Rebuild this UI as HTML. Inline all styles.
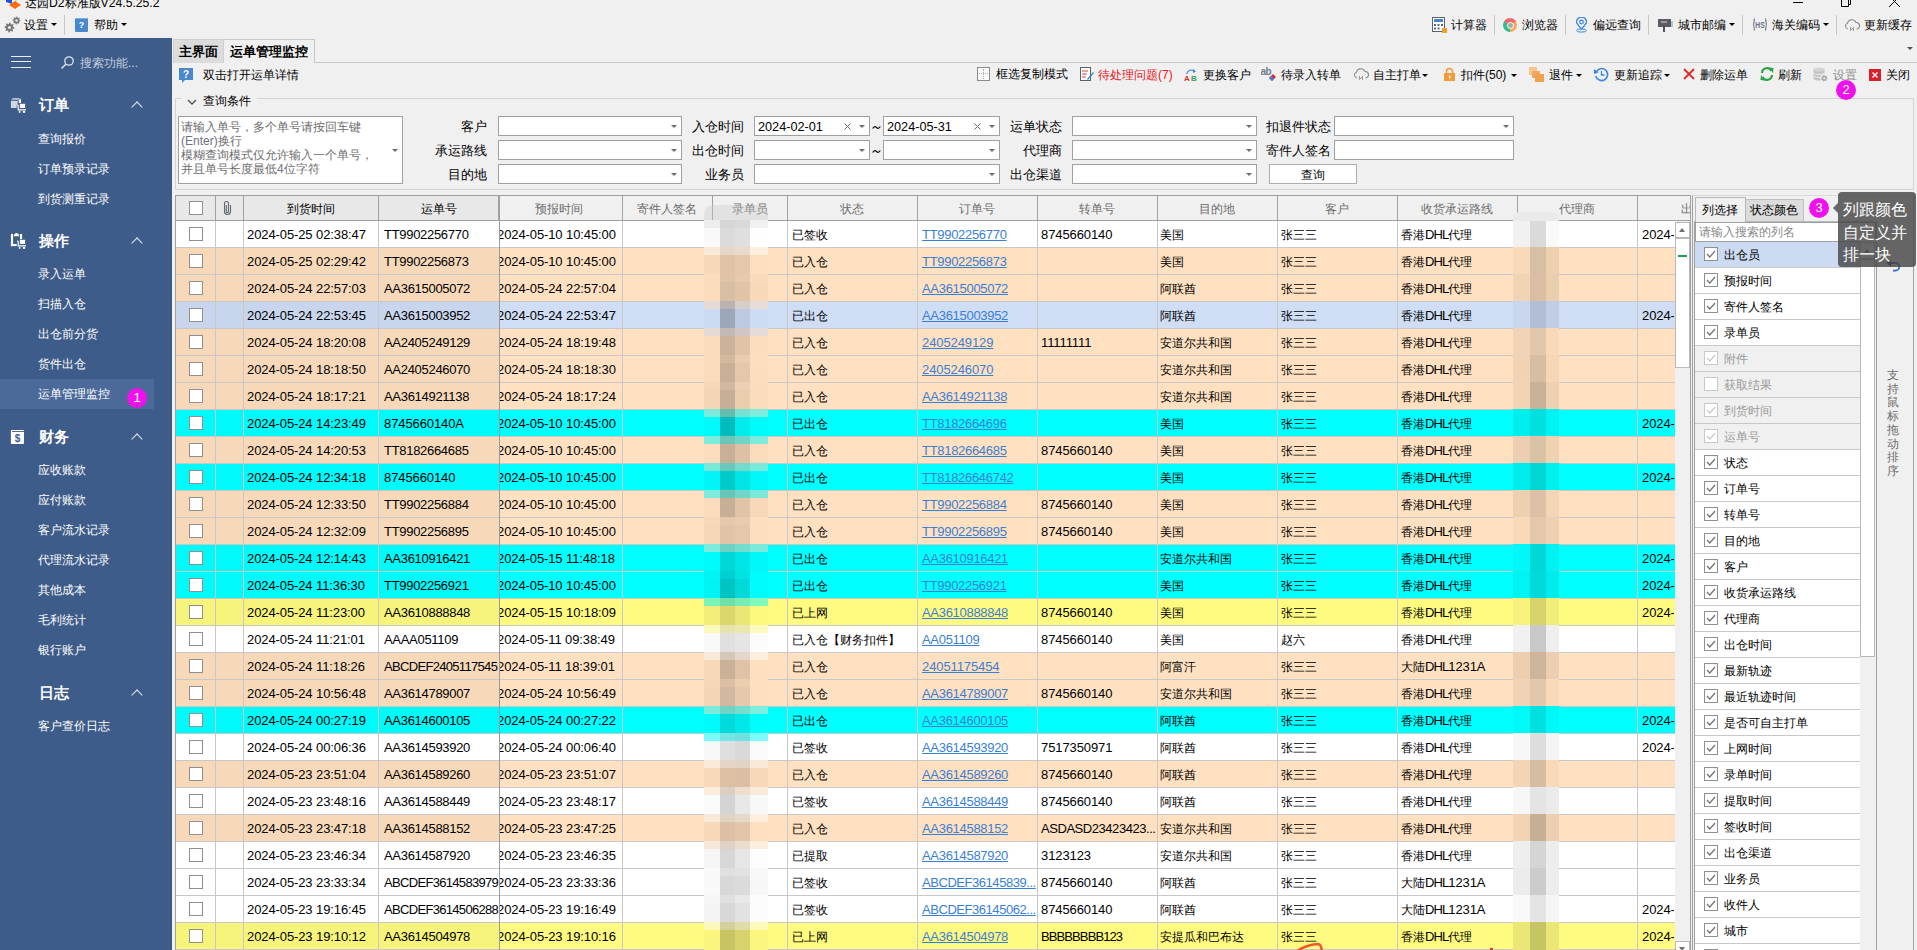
<!DOCTYPE html><html><head><meta charset="utf-8"><title>solution</title><style>
*{box-sizing:border-box;margin:0;padding:0}
html,body{width:1917px;height:950px;overflow:hidden;background:#f0f0f0;font-family:"Liberation Sans",sans-serif;font-size:12px;color:#000}
.ab{position:absolute}
.t{position:absolute;white-space:nowrap;line-height:14px;font-size:12px}
.sb{position:absolute;left:0;top:38px;width:172px;height:912px;background:#3e5c89}
.sbh{position:absolute;left:39px;font-size:15px;font-weight:bold;color:#fff;line-height:16px}
.sbi{position:absolute;left:38px;font-size:12px;color:#fff;line-height:14px;white-space:nowrap}
.chev{position:absolute;left:133px;width:8px;height:8px;border-left:1.3px solid #dfe6ef;border-top:1.3px solid #dfe6ef;transform:rotate(45deg)}
.badge{position:absolute;width:20px;height:20px;border-radius:50%;background:#ee11ee;color:#fff;font-size:13px;line-height:20px;text-align:center}
.tb{position:absolute;white-space:nowrap;line-height:14px;font-size:12px;color:#000}
.sep{position:absolute;width:1px;background:#c8c8c8}
.dd{position:absolute;width:0;height:0;border-left:3px solid transparent;border-right:3px solid transparent;border-top:3px solid #000}
.cb{position:absolute;background:#fff;border:1px solid #a0a0a0}
.cba{position:absolute;width:0;height:0;border-left:3px solid transparent;border-right:3px solid transparent;border-top:3px solid #6d6d6d}
.lbl{position:absolute;white-space:nowrap;line-height:14px;font-size:12.5px;text-align:right}
.grid{position:absolute;left:175px;top:195px;width:1517px;height:755px;background:#fff;overflow:hidden;border-left:1px solid #a0a0a0;border-top:1px solid #a0a0a0}
.row{position:absolute;left:0;width:1500px;height:27px;border-bottom:1px solid #c8c8c8}
.vl{position:absolute;top:0;width:1px;height:27px;background:#c8c8c8}
.cell{position:absolute;top:1px;height:25px;line-height:26px;white-space:nowrap;overflow:hidden;font-size:12px}
.l{font-size:13px;letter-spacing:-0.1px}
.lnk{color:#3b7fd4;text-decoration:underline}
.ck{position:absolute;width:14px;height:14px;background:#fff;border:1px solid #8f8f8f}
.hd{position:absolute;top:0;height:24px;line-height:24px;text-align:center;font-size:12px;color:#6d6d6d;white-space:nowrap;overflow:hidden}
</style></head><body>
<div class="ab" style="left:6px;top:-4px;width:15px;height:13px"><svg width="15" height="13" viewBox="0 0 15 13"><polygon points="0,0 6,0 6,8 0,6" fill="#1a4fe0"/><polygon points="7,0 13,0 10,5" fill="#2aa838"/><polygon points="3,9 9,5 15,9 9,13" fill="#ff6a13"/></svg></div>
<div class="t" style="left:25px;top:-5px;font-size:12.2px;line-height:16px;color:#000">达园D2标准版V24.5.25.2</div>
<div class="ab" style="left:1793px;top:2px;width:10px;height:1px;background:#000"></div>
<svg class="ab" style="left:1840px;top:0" width="13" height="8" viewBox="0 0 13 8"><path d="M1.5 -3 V6.5 H8.5 V-3" fill="none" stroke="#000" stroke-width="1"/><path d="M8.5 4.5 H10.5 V-3" fill="none" stroke="#000" stroke-width="1"/></svg>
<svg class="ab" style="left:1888px;top:0" width="12" height="8" viewBox="0 0 12 8"><path d="M1 7 L6.5 1.5 L12 7 M6.5 1.5 L1 -4 M6.5 1.5 L12 -4" fill="none" stroke="#000" stroke-width="1"/></svg>
<div class="ab" style="left:4px;top:16px;width:17px;height:17px"><svg width="17" height="17" viewBox="0 0 17 17"><polygon points="10.50,11.50 10.40,12.48 8.83,12.88 8.49,13.50 9.04,15.04 8.28,15.66 6.88,14.83 6.20,15.03 5.50,16.50 4.52,16.40 4.12,14.83 3.50,14.49 1.96,15.04 1.34,14.28 2.17,12.88 1.97,12.20 0.50,11.50 0.60,10.52 2.17,10.12 2.51,9.50 1.96,7.96 2.72,7.34 4.12,8.17 4.80,7.97 5.50,6.50 6.48,6.60 6.88,8.17 7.50,8.51 9.04,7.96 9.66,8.72 8.83,10.12 9.03,10.80" fill="#787878"/><circle cx="5.5" cy="11.5" r="1.50" fill="#f0f0f0"/><polygon points="16.50,4.50 16.42,5.28 15.16,5.60 14.89,6.10 15.33,7.33 14.72,7.83 13.60,7.16 13.06,7.32 12.50,8.50 11.72,8.42 11.40,7.16 10.90,6.89 9.67,7.33 9.17,6.72 9.84,5.60 9.68,5.06 8.50,4.50 8.58,3.72 9.84,3.40 10.11,2.90 9.67,1.67 10.28,1.17 11.40,1.84 11.94,1.68 12.50,0.50 13.28,0.58 13.60,1.84 14.10,2.11 15.33,1.67 15.83,2.28 15.16,3.40 15.32,3.94" fill="#787878"/><circle cx="12.5" cy="4.5" r="1.20" fill="#f0f0f0"/></svg></div>
<div class="tb" style="left:24px;top:18px">设置</div><div class="dd" style="left:51px;top:23px"></div>
<div class="sep" style="left:64px;top:15px;height:20px"></div>
<div class="ab" style="left:75px;top:18px;width:13px;height:14px;background:#4a88cc;border-radius:1px"><div style="position:absolute;left:0;top:0;width:13px;height:1px;background:#7ab0e8"></div><div style="position:absolute;left:0;top:1px;width:13px;text-align:center;color:#fff;font-size:9px;line-height:13px;font-weight:bold">?</div></div>
<div class="tb" style="left:94px;top:18px">帮助</div><div class="dd" style="left:121px;top:23px"></div>
<div class="ab" style="left:1432px;top:17px;width:15px;height:16px"><svg width="15" height="16" viewBox="0 0 15 16"><rect x="0.5" y="0.5" width="12" height="14" fill="#fff" stroke="#5a6478"/><rect x="2" y="2" width="9" height="3" fill="#4a82d0"/><rect x="2" y="7" width="2" height="2" fill="#5a6478"/><rect x="5.5" y="7" width="2" height="2" fill="#5a6478"/><rect x="9" y="7" width="2" height="2" fill="#5a6478"/><rect x="2" y="10.5" width="2" height="2" fill="#5a6478"/><rect x="5.5" y="10.5" width="2" height="2" fill="#5a6478"/><rect x="10" y="11" width="5" height="5" fill="#f0a030"/></svg></div>
<div class="tb" style="left:1451px;top:18px">计算器</div>
<div class="sep" style="left:1494px;top:15px;height:20px"></div>
<div class="ab" style="left:1503px;top:18px;width:14px;height:14px;border-radius:50%;background:conic-gradient(from -60deg,#f26a6a 0 120deg,#f8a85c 120deg 240deg,#2fbf8a 240deg 360deg)"><div style="position:absolute;left:3.5px;top:3.5px;width:7px;height:7px;border-radius:50%;background:#a8a8a8;border:1.5px solid #fff"></div></div>
<div class="tb" style="left:1522px;top:18px">浏览器</div>
<div class="sep" style="left:1565px;top:15px;height:20px"></div>
<div class="ab" style="left:1575px;top:17px;width:13px;height:16px"><svg width="13" height="16" viewBox="0 0 13 16"><path d="M6.5 12 C3 8,1.5 6.5,1.5 5 A5 5 0 0 1 11.5 5 C11.5 6.5,10 8,6.5 12Z" fill="none" stroke="#3a86e0" stroke-width="1.3"/><circle cx="6.5" cy="5" r="1.8" fill="none" stroke="#3a86e0" stroke-width="1.2"/><ellipse cx="6.5" cy="13.5" rx="5" ry="1.6" fill="none" stroke="#3a86e0" stroke-width="1"/></svg></div>
<div class="tb" style="left:1593px;top:18px">偏远查询</div>
<div class="sep" style="left:1648px;top:15px;height:20px"></div>
<div class="ab" style="left:1658px;top:18px;width:15px;height:14px"><svg width="15" height="14" viewBox="0 0 15 14"><rect x="0" y="1" width="13" height="8" fill="#5a5a60"/><rect x="3" y="3" width="6" height="2" fill="#9a9aa0"/><rect x="5" y="8" width="2" height="6" fill="#50505a"/><rect x="13" y="3" width="2" height="6" fill="#9ad0d0"/></svg></div>
<div class="tb" style="left:1678px;top:18px">城市邮编</div><div class="dd" style="left:1729px;top:23px"></div>
<div class="sep" style="left:1742px;top:15px;height:20px"></div>
<svg class="ab" style="left:1752px;top:17px" width="16" height="15" viewBox="0 0 16 15"><path d="M2.5 1.5 Q0.8 7.5 2.5 13.5" fill="none" stroke="#6a7284" stroke-width="1.1"/><path d="M13.5 1.5 Q15.2 7.5 13.5 13.5" fill="none" stroke="#6a7284" stroke-width="1.1"/><text x="8" y="11" font-size="9" font-weight="bold" fill="#6a7284" text-anchor="middle" font-family="Liberation Sans" transform="translate(8 0) scale(0.75 1) translate(-8 0)">HS</text></svg>
<div class="tb" style="left:1772px;top:18px">海关编码</div><div class="dd" style="left:1823px;top:23px"></div>
<div class="sep" style="left:1836px;top:15px;height:20px"></div>
<div class="ab" style="left:1844px;top:18px;width:16px;height:14px"><svg width="16" height="14" viewBox="0 0 16 14"><path d="M4 11 A3 3 0 0 1 3.5 5.2 A4.5 4.5 0 0 1 12 4.5 A3.2 3.2 0 0 1 12.5 11" fill="none" stroke="#8a8a8a" stroke-width="1.1"/><path d="M6.5 9 L6.5 12.5 L9.5 9.5 L9.5 13" fill="none" stroke="#8a8a8a" stroke-width="0.9"/></svg></div>
<div class="tb" style="left:1864px;top:18px">更新缓存</div>
<div class="dd" style="left:1907px;top:47px;border-top-color:#505050"></div>
<div class="sb"></div>
<div class="ab" style="left:11px;top:56px;width:20px;height:1.4px;background:#e8edf4"></div>
<div class="ab" style="left:11px;top:61px;width:20px;height:1.4px;background:#e8edf4"></div>
<div class="ab" style="left:11px;top:67px;width:20px;height:1.4px;background:#e8edf4"></div>
<div class="ab" style="left:60px;top:55px;width:15px;height:15px"><svg width="15" height="15" viewBox="0 0 15 15"><circle cx="9" cy="6" r="4.2" fill="none" stroke="#e0e6f0" stroke-width="1.3"/><line x1="6" y1="9" x2="1.5" y2="13.5" stroke="#e0e6f0" stroke-width="1.5"/></svg></div>
<div class="sbi" style="left:80px;top:56px;color:#c3cedd">搜索功能...</div>
<div class="ab" style="left:0;top:379px;width:154px;height:30px;background:#4b6a9a"></div>
<svg class="ab" style="left:10px;top:97px" width="17" height="17" viewBox="0 0 17 17"><polygon points="1,2.7 3,0.9 9.8,0.9 8.5,2.7" fill="#b8c4d6"/><polygon points="8.8,3.3 10.5,1.6 11,2.3 11,6 8.8,6" fill="#fff"/><rect x="0.9" y="3.8" width="6.8" height="7.2" fill="#d0d8e4"/><path d="M7.2 7.8 L8.2 8.5 V12.8 H16" fill="none" stroke="#3e5c89" stroke-width="3"/><path d="M7.2 7.8 L8.2 8.5 V12.8 H16" fill="none" stroke="#fff" stroke-width="1.2"/><rect x="9.4" y="6.3" width="6.2" height="5.2" fill="#3e5c89"/><rect x="9.9" y="6.8" width="5.2" height="4.2" fill="#fff"/><rect x="8.9" y="14" width="1.5" height="1.8" fill="#fff"/><rect x="12.9" y="14" width="2.2" height="1.8" fill="#fff"/></svg>
<div class="sbh" style="top:97px">订单</div>
<div class="chev" style="top:103px"></div>
<div class="sbi" style="top:132px">查询报价</div>
<div class="sbi" style="top:162px">订单预录记录</div>
<div class="sbi" style="top:192px">到货测重记录</div>
<svg class="ab" style="left:10px;top:233px" width="17" height="17" viewBox="0 0 17 17"><rect x="0.9" y="0.9" width="2.2" height="12.2" fill="#fff"/><rect x="0.9" y="11" width="6.5" height="2.1" fill="#fff"/><path d="M4 3.2 H9 V1.8 Q8 0 6.5 0 Q5 0 4 1.8 Z" fill="#fff"/><rect x="9.9" y="1" width="2.2" height="5.2" fill="#fff"/><path d="M7.2 7.8 L8.2 8.5 V12.8 H16" fill="none" stroke="#3e5c89" stroke-width="3"/><path d="M7.2 7.8 L8.2 8.5 V12.8 H16" fill="none" stroke="#fff" stroke-width="1.2"/><rect x="9.4" y="6.3" width="6.2" height="5.2" fill="#3e5c89"/><rect x="9.9" y="6.8" width="5.2" height="4.2" fill="#fff"/><rect x="8.9" y="14" width="1.5" height="1.8" fill="#fff"/><rect x="12.9" y="14" width="2.2" height="1.8" fill="#fff"/></svg>
<div class="sbh" style="top:233px">操作</div>
<div class="chev" style="top:239px"></div>
<div class="sbi" style="top:267px">录入运单</div>
<div class="sbi" style="top:297px">扫描入仓</div>
<div class="sbi" style="top:327px">出仓前分货</div>
<div class="sbi" style="top:357px">货件出仓</div>
<div class="sbi" style="top:387px">运单管理监控</div>
<svg class="ab" style="left:10px;top:429px" width="15" height="16" viewBox="0 0 15 16"><rect x="0.9" y="0.9" width="13.1" height="14.1" rx="1" fill="#fff"/><rect x="2" y="2.1" width="12" height="0.9" fill="#3e5c89"/><text x="7.5" y="12.6" font-size="10" font-weight="bold" fill="#3e5c89" text-anchor="middle" font-family="Liberation Sans">$</text></svg>
<div class="sbh" style="top:429px">财务</div>
<div class="chev" style="top:435px"></div>
<div class="sbi" style="top:463px">应收账款</div>
<div class="sbi" style="top:493px">应付账款</div>
<div class="sbi" style="top:523px">客户流水记录</div>
<div class="sbi" style="top:553px">代理流水记录</div>
<div class="sbi" style="top:583px">其他成本</div>
<div class="sbi" style="top:613px">毛利统计</div>
<div class="sbi" style="top:643px">银行账户</div>
<div class="sbh" style="top:685px">日志</div>
<div class="chev" style="top:691px"></div>
<div class="sbi" style="top:719px">客户查价日志</div>
<div class="badge" style="left:127px;top:388px">1</div>
<div class="ab" style="left:173px;top:39px;width:51px;height:24px;background:#dcdcdc;border:1px solid #cfcfcf;border-bottom:none"></div>
<div class="t" style="left:179px;top:45px;font-weight:bold;font-size:13px;line-height:14px">主界面</div>
<div class="ab" style="left:224px;top:39px;width:91px;height:24px;background:#f0f0f0;border:1px solid #c8c8c8;border-bottom:none;border-left:none"></div>
<div class="t" style="left:230px;top:45px;font-weight:bold;font-size:13px;line-height:14px">运单管理监控</div>
<div class="ab" style="left:315px;top:62px;width:1602px;height:1px;background:#c8c8c8"></div>
<div class="ab" style="left:179px;top:68px;width:14px;height:15px"><svg width="14" height="15" viewBox="0 0 14 15"><rect x="0" y="0" width="14" height="12" fill="#4a88cc"/><polygon points="3,12 6,12 3,15" fill="#4a88cc"/><text x="7" y="9.5" font-size="10" font-weight="bold" fill="#fff" text-anchor="middle" font-family="Liberation Sans">?</text></svg></div>
<div class="tb" style="left:203px;top:68px">双击打开运单详情</div>
<div class="ab" style="left:977px;top:67px;width:13px;height:14px;border:1px solid #8a8a8a;background:#fafafa"><div style="position:absolute;left:5px;top:1px;width:0;height:10px;border-left:1px dotted #b0b0b0"></div><div style="position:absolute;left:1px;top:5px;width:9px;height:0;border-top:1px dotted #b0b0b0"></div></div>
<div class="tb" style="left:996px;top:67px">框选复制模式</div>
<div class="ab" style="left:1080px;top:67px;width:14px;height:15px"><svg width="14" height="15" viewBox="0 0 14 15"><rect x="0.5" y="0.5" width="10" height="13" fill="#fff" stroke="#606060"/><line x1="2" y1="4" x2="8" y2="4" stroke="#d04040"/><line x1="2" y1="7" x2="7" y2="7" stroke="#d04040"/><line x1="2" y1="10" x2="6" y2="10" stroke="#d04040"/><path d="M7 12 L13 5 L14 6 L8 13 Z" fill="#3a86e0"/></svg></div>
<div class="tb" style="left:1098px;top:68px;color:#e8141a">待处理问题(7)</div>
<div class="ab" style="left:1184px;top:67px;width:14px;height:15px"><svg width="14" height="15" viewBox="0 0 14 15"><text x="0" y="14" font-size="8" font-weight="bold" fill="#d83030" font-family="Liberation Sans">A</text><text x="7" y="14" font-size="8" font-weight="bold" fill="#30a050" font-family="Liberation Sans">B</text><path d="M2.5 7 Q5 1 10 4" fill="none" stroke="#3a86e0" stroke-width="1.2"/><polygon points="9,2 12,4.5 9,6" fill="#3a86e0"/></svg></div>
<div class="tb" style="left:1203px;top:68px">更换客户</div>
<div class="ab" style="left:1261px;top:66px;width:17px;height:16px"><svg width="17" height="16" viewBox="0 0 17 16"><text x="-0.5" y="8.5" font-size="10" font-weight="bold" fill="#737b8a" font-family="Liberation Sans" letter-spacing="-0.5">ab</text><path d="M8 12 L12 8 L15 11 L11 15 Z" fill="#e02838"/><path d="M8 12 L10 10 L13 13 L11 15 Z" fill="#3a86e0"/></svg></div>
<div class="tb" style="left:1281px;top:68px">待录入转单</div>
<div class="ab" style="left:1353px;top:67px;width:16px;height:14px"><svg width="16" height="14" viewBox="0 0 16 14"><path d="M4 11 A3 3 0 0 1 3.5 5.2 A4.5 4.5 0 0 1 12 4.5 A3.2 3.2 0 0 1 12.5 11" fill="none" stroke="#8a8a8a" stroke-width="1.1"/><path d="M6.5 9 L6.5 12.5 L9.5 9.5 L9.5 13" fill="none" stroke="#8a8a8a" stroke-width="0.9"/></svg></div>
<div class="tb" style="left:1373px;top:68px">自主打单</div><div class="dd" style="left:1422px;top:74px"></div>
<div class="ab" style="left:1444px;top:67px;width:11px;height:14px"><svg width="11" height="14" viewBox="0 0 11 14"><path d="M2.5 6 V4.5 A3 3 0 0 1 8.5 4.5 V6" fill="none" stroke="#f39a3c" stroke-width="1.6"/><rect x="0" y="6" width="11" height="8" fill="#f39a3c"/><rect x="5" y="8.5" width="1.4" height="3" fill="#fff"/></svg></div>
<div class="tb" style="left:1461px;top:68px">扣件(50)</div><div class="dd" style="left:1511px;top:74px"></div>
<div class="ab" style="left:1529px;top:67px;width:15px;height:15px"><svg width="15" height="15" viewBox="0 0 15 15"><rect x="0" y="0" width="8" height="8" fill="#f7c590"/><rect x="3" y="4" width="8" height="7" fill="#f0a860"/><rect x="6" y="7" width="9" height="8" fill="#f0a050"/></svg></div>
<div class="tb" style="left:1549px;top:68px">退件</div><div class="dd" style="left:1576px;top:74px"></div>
<div class="ab" style="left:1594px;top:67px;width:15px;height:15px"><svg width="15" height="15" viewBox="0 0 15 15"><path d="M2.2 5 A6 6 0 1 1 1.8 9" fill="none" stroke="#3a86e0" stroke-width="1.6"/><polygon points="0,2 4.5,5.5 0,7" fill="#3a86e0"/><path d="M7.5 4 V8 H10.5" fill="none" stroke="#3a86e0" stroke-width="1.3"/></svg></div>
<div class="tb" style="left:1614px;top:68px">更新追踪</div><div class="dd" style="left:1664px;top:74px"></div>
<div class="ab" style="left:1683px;top:68px;width:12px;height:12px"><svg width="12" height="12" viewBox="0 0 12 12"><path d="M1 1 L11 11 M11 1 L1 11" stroke="#e02828" stroke-width="1.8"/></svg></div>
<div class="tb" style="left:1700px;top:68px">删除运单</div>
<div class="ab" style="left:1760px;top:67px;width:14px;height:14px"><svg width="14" height="14" viewBox="0 0 14 14"><path d="M2 6 A5 5 0 0 1 11.5 4" fill="none" stroke="#2ea04a" stroke-width="2.2"/><polygon points="9,0.5 13.5,1 13,6" fill="#2ea04a"/><path d="M12 8 A5 5 0 0 1 2.5 10" fill="none" stroke="#2ea04a" stroke-width="2.2"/><polygon points="5,13.5 0.5,13 1,8" fill="#2ea04a"/></svg></div>
<div class="tb" style="left:1778px;top:68px">刷新</div>
<div class="ab" style="left:1813px;top:67px;width:15px;height:15px"><svg width="15" height="15" viewBox="0 0 15 15"><path d="M0.5 2.5 V11.5 A5.5 2 0 0 0 11.5 11.5 V2.5 Z" fill="#c4c4c4"/><ellipse cx="6" cy="2.5" rx="5.5" ry="2" fill="#d4d4d4"/><path d="M0.5 5.5 A5.5 2 0 0 0 11.5 5.5 M0.5 8.5 A5.5 2 0 0 0 11.5 8.5" fill="none" stroke="#eeeeee" stroke-width="0.9"/><circle cx="11.3" cy="11.3" r="4" fill="#f0f0f0"/><polygon points="14.70,11.30 14.61,12.06 13.51,12.36 13.21,12.83 13.42,13.96 12.78,14.36 11.84,13.69 11.30,13.75 10.54,14.61 9.82,14.36 9.77,13.21 9.39,12.83 8.24,12.78 7.99,12.06 8.85,11.30 8.91,10.76 8.24,9.82 8.64,9.18 9.77,9.39 10.24,9.09 10.54,7.99 11.30,7.90 11.84,8.91 12.36,9.09 13.42,8.64 13.96,9.18 13.51,10.24 13.69,10.76" fill="#a8a8a8"/><circle cx="11.3" cy="11.3" r="1.02" fill="#f0f0f0"/></svg></div>
<div class="tb" style="left:1833px;top:68px;color:#8d8d8d">设置</div>
<div class="ab" style="left:1869px;top:69px;width:12px;height:12px;background:#d8202c"><svg width="12" height="12" viewBox="0 0 12 12"><path d="M3.5 3.5 L8.5 8.5 M8.5 3.5 L3.5 8.5" stroke="#fff" stroke-width="1.4"/></svg></div>
<div class="tb" style="left:1886px;top:68px">关闭</div>
<div class="ab" style="left:175px;top:98px;width:1739px;height:92px;border:1px solid #d5d5d5;border-top:none"></div>
<div class="ab" style="left:175px;top:98px;width:7px;height:1px;background:#d5d5d5"></div>
<div class="ab" style="left:257px;top:98px;width:1657px;height:1px;background:#d5d5d5"></div>
<div class="ab" style="left:187px;top:95px;width:10px;height:8px"><svg width="10" height="8" viewBox="0 0 10 8"><path d="M1 2 L5 6 L9 2" fill="none" stroke="#505050" stroke-width="1.3"/></svg></div>
<div class="tb" style="left:203px;top:94px">查询条件</div>
<div class="cb" style="left:178px;top:116px;width:225px;height:68px"></div>
<div class="t" style="left:181px;top:120px;color:#6d6d6d;line-height:14px;white-space:pre">请输入单号，多个单号请按回车键
<span style="color:#6f7380">(Enter)</span>换行
模糊查询模式仅允许输入一个单号，
并且单号长度最低<span style="color:#6f7380">4</span>位字符</div>
<div class="cba" style="left:392px;top:149px"></div>
<div class="lbl" style="left:387px;width:100px;top:120px">客户</div>
<div class="cb" style="left:498px;top:116px;width:184px;height:20px"></div><div class="cba" style="left:671px;top:125px"></div>
<div class="lbl" style="left:387px;width:100px;top:144px">承运路线</div>
<div class="cb" style="left:498px;top:140px;width:184px;height:20px"></div><div class="cba" style="left:671px;top:149px"></div>
<div class="lbl" style="left:387px;width:100px;top:168px">目的地</div>
<div class="cb" style="left:498px;top:164px;width:184px;height:20px"></div><div class="cba" style="left:671px;top:173px"></div>
<div class="lbl" style="left:644px;width:100px;top:120px">入仓时间</div>
<div class="lbl" style="left:644px;width:100px;top:144px">出仓时间</div>
<div class="lbl" style="left:644px;width:100px;top:168px">业务员</div>
<div class="cb" style="left:754px;top:116px;width:116px;height:20px"></div><div class="cba" style="left:859px;top:125px"></div>
<div class="cb" style="left:883px;top:116px;width:117px;height:20px"></div><div class="cba" style="left:989px;top:125px"></div>
<div class="t" style="left:758px;top:120px;font-size:12.7px">2024-02-01</div><svg class="ab" style="left:844px;top:123px" width="7" height="7" viewBox="0 0 7 7"><path d="M0.5 0.5 L6.5 6.5 M6.5 0.5 L0.5 6.5" stroke="#6a6a6a" stroke-width="1"/></svg>
<div class="t" style="left:887px;top:120px;font-size:12.7px">2024-05-31</div><svg class="ab" style="left:974px;top:123px" width="7" height="7" viewBox="0 0 7 7"><path d="M0.5 0.5 L6.5 6.5 M6.5 0.5 L0.5 6.5" stroke="#6a6a6a" stroke-width="1"/></svg>
<div class="cb" style="left:754px;top:140px;width:116px;height:20px"></div><div class="cba" style="left:859px;top:149px"></div>
<div class="cb" style="left:883px;top:140px;width:117px;height:20px"></div><div class="cba" style="left:989px;top:149px"></div>
<svg class="ab" style="left:872px;top:125px" width="9" height="5" viewBox="0 0 9 5"><path d="M0.7 3.5 Q2.5 0.5 4.5 2.5 Q6.5 4.5 8.3 1.5" fill="none" stroke="#000" stroke-width="1.2"/></svg><svg class="ab" style="left:872px;top:149px" width="9" height="5" viewBox="0 0 9 5"><path d="M0.7 3.5 Q2.5 0.5 4.5 2.5 Q6.5 4.5 8.3 1.5" fill="none" stroke="#000" stroke-width="1.2"/></svg>
<div class="cb" style="left:754px;top:164px;width:246px;height:20px"></div><div class="cba" style="left:989px;top:173px"></div>
<div class="lbl" style="left:962px;width:100px;top:120px">运单状态</div>
<div class="cb" style="left:1072px;top:116px;width:185px;height:20px"></div><div class="cba" style="left:1246px;top:125px"></div>
<div class="lbl" style="left:962px;width:100px;top:144px">代理商</div>
<div class="cb" style="left:1072px;top:140px;width:185px;height:20px"></div><div class="cba" style="left:1246px;top:149px"></div>
<div class="lbl" style="left:962px;width:100px;top:168px">出仓渠道</div>
<div class="cb" style="left:1072px;top:164px;width:185px;height:20px"></div><div class="cba" style="left:1246px;top:173px"></div>
<div class="lbl" style="left:1231px;width:100px;top:120px">扣退件状态</div>
<div class="cb" style="left:1334px;top:116px;width:180px;height:20px"></div><div class="cba" style="left:1503px;top:125px"></div>
<div class="lbl" style="left:1231px;width:100px;top:144px">寄件人签名</div>
<div class="cb" style="left:1334px;top:140px;width:180px;height:20px"></div>
<div class="ab" style="left:1269px;top:164px;width:88px;height:20px;background:#fff;border:1px solid #adadad;text-align:center;line-height:20px">查询</div>
<div class="ab" style="left:175px;top:195px;width:1516px;height:755px;overflow:hidden;background:#fff">
<div class="ab" style="left:0;top:0;width:1516px;height:26px;background:#f0f0f0;border-top:1px solid #a0a0a0;border-bottom:1px solid #a0a0a0"></div>
<div class="ab" style="left:1px;top:1px;width:323px;height:24px;background:#e8e8e8"></div>
<div class="hd" style="left:68px;width:135px;top:2px;color:#000">到货时间</div>
<div class="hd" style="left:203px;width:121px;top:2px;color:#000">运单号</div>
<div class="hd" style="left:320px;width:127px;top:2px;color:#6d6d6d">预报时间</div>
<div class="hd" style="left:447px;width:90px;top:2px;color:#6d6d6d">寄件人签名</div>
<div class="hd" style="left:537px;width:75px;top:2px;color:#6d6d6d">录单员</div>
<div class="hd" style="left:612px;width:130px;top:2px;color:#6d6d6d">状态</div>
<div class="hd" style="left:742px;width:120px;top:2px;color:#6d6d6d">订单号</div>
<div class="hd" style="left:862px;width:120px;top:2px;color:#6d6d6d">转单号</div>
<div class="hd" style="left:982px;width:120px;top:2px;color:#6d6d6d">目的地</div>
<div class="hd" style="left:1102px;width:120px;top:2px;color:#6d6d6d">客户</div>
<div class="hd" style="left:1222px;width:120px;top:2px;color:#6d6d6d">收货承运路线</div>
<div class="hd" style="left:1342px;width:120px;top:2px;color:#6d6d6d">代理商</div>
<div class="hd" style="left:1506px;width:79px;top:2px;color:#6d6d6d;text-align:left">出仓员</div>
<div class="ck" style="left:14px;top:6px"></div>
<div class="ab" style="left:48px;top:5px;width:9px;height:16px"><svg width="9" height="16" viewBox="0 0 9 16"><path d="M3.3 5 V11.5 A1.1 1.1 0 0 0 5.5 11.5 V3.5 A2 2 0 0 0 1.5 3.5 V11.5 A3 3 0 0 0 7.5 11.5 V5" fill="none" stroke="#5f6470" stroke-width="1.1"/></svg></div>
<div class="row" style="top:26px;background:#ffffff">
<div class="ab" style="left:0;top:0;width:324px;height:26px;background:#ffffff"></div>
<div class="ck" style="left:14px;top:6px"></div>
<div class="cell" style="left:69px;width:134px"><span class="" style="position:absolute;left:3px;top:0"><span class="l">2024-05-25 02:38:47</span></span></div>
<div class="cell" style="left:204px;width:120px"><span class="" style="position:absolute;left:5px;top:0"><span class="l" style="letter-spacing:-0.3px">TT9902256770</span></span></div>
<div class="cell" style="left:325px;width:122px"><span class="" style="position:absolute;left:-3px;top:0"><span class="l">2024-05-10 10:45:00</span></span></div>
<div class="cell" style="left:613px;width:129px"><span class="" style="position:absolute;left:4px;top:0">已签收</span></div>
<div class="cell" style="left:743px;width:119px"><span class="lnk" style="position:absolute;left:4px;top:0"><span class="l" style="letter-spacing:-0.3px">TT9902256770</span></span></div>
<div class="cell" style="left:863px;width:119px"><span class="" style="position:absolute;left:3px;top:0"><span class="l">8745660140</span></span></div>
<div class="cell" style="left:983px;width:119px"><span class="" style="position:absolute;left:2px;top:0">美国</span></div>
<div class="cell" style="left:1103px;width:119px"><span class="" style="position:absolute;left:3px;top:0">张三三</span></div>
<div class="cell" style="left:1223px;width:119px"><span class="" style="position:absolute;left:3px;top:0">香港<span class="l"><span style="letter-spacing:-0.9px">DHL</span></span>代理</span></div>
<div class="cell" style="left:1463px;width:36px"><span class="" style="position:absolute;left:4px;top:0"><span class="l">2024-05-24</span></span></div>
</div>
<div class="row" style="top:53px;background:#ffe0c0">
<div class="ab" style="left:0;top:0;width:324px;height:26px;background:#f7d9b9"></div>
<div class="ck" style="left:14px;top:6px"></div>
<div class="cell" style="left:69px;width:134px"><span class="" style="position:absolute;left:3px;top:0"><span class="l">2024-05-25 02:29:42</span></span></div>
<div class="cell" style="left:204px;width:120px"><span class="" style="position:absolute;left:5px;top:0"><span class="l" style="letter-spacing:-0.3px">TT9902256873</span></span></div>
<div class="cell" style="left:325px;width:122px"><span class="" style="position:absolute;left:-3px;top:0"><span class="l">2024-05-10 10:45:00</span></span></div>
<div class="cell" style="left:613px;width:129px"><span class="" style="position:absolute;left:4px;top:0">已入仓</span></div>
<div class="cell" style="left:743px;width:119px"><span class="lnk" style="position:absolute;left:4px;top:0"><span class="l" style="letter-spacing:-0.3px">TT9902256873</span></span></div>
<div class="cell" style="left:983px;width:119px"><span class="" style="position:absolute;left:2px;top:0">美国</span></div>
<div class="cell" style="left:1103px;width:119px"><span class="" style="position:absolute;left:3px;top:0">张三三</span></div>
<div class="cell" style="left:1223px;width:119px"><span class="" style="position:absolute;left:3px;top:0">香港<span class="l"><span style="letter-spacing:-0.9px">DHL</span></span>代理</span></div>
</div>
<div class="row" style="top:80px;background:#ffe0c0">
<div class="ab" style="left:0;top:0;width:324px;height:26px;background:#f7d9b9"></div>
<div class="ck" style="left:14px;top:6px"></div>
<div class="cell" style="left:69px;width:134px"><span class="" style="position:absolute;left:3px;top:0"><span class="l">2024-05-24 22:57:03</span></span></div>
<div class="cell" style="left:204px;width:120px"><span class="" style="position:absolute;left:5px;top:0"><span class="l" style="letter-spacing:-0.3px">AA3615005072</span></span></div>
<div class="cell" style="left:325px;width:122px"><span class="" style="position:absolute;left:-3px;top:0"><span class="l">2024-05-24 22:57:04</span></span></div>
<div class="cell" style="left:613px;width:129px"><span class="" style="position:absolute;left:4px;top:0">已入仓</span></div>
<div class="cell" style="left:743px;width:119px"><span class="lnk" style="position:absolute;left:4px;top:0"><span class="l" style="letter-spacing:-0.3px">AA3615005072</span></span></div>
<div class="cell" style="left:983px;width:119px"><span class="" style="position:absolute;left:2px;top:0">阿联酋</span></div>
<div class="cell" style="left:1103px;width:119px"><span class="" style="position:absolute;left:3px;top:0">张三三</span></div>
<div class="cell" style="left:1223px;width:119px"><span class="" style="position:absolute;left:3px;top:0">香港<span class="l"><span style="letter-spacing:-0.9px">DHL</span></span>代理</span></div>
</div>
<div class="row" style="top:107px;background:#cfddf5">
<div class="ab" style="left:0;top:0;width:324px;height:26px;background:#c8d6ed"></div>
<div class="ck" style="left:14px;top:6px"></div>
<div class="cell" style="left:69px;width:134px"><span class="" style="position:absolute;left:3px;top:0"><span class="l">2024-05-24 22:53:45</span></span></div>
<div class="cell" style="left:204px;width:120px"><span class="" style="position:absolute;left:5px;top:0"><span class="l" style="letter-spacing:-0.3px">AA3615003952</span></span></div>
<div class="cell" style="left:325px;width:122px"><span class="" style="position:absolute;left:-3px;top:0"><span class="l">2024-05-24 22:53:47</span></span></div>
<div class="cell" style="left:613px;width:129px"><span class="" style="position:absolute;left:4px;top:0">已出仓</span></div>
<div class="cell" style="left:743px;width:119px"><span class="lnk" style="position:absolute;left:4px;top:0"><span class="l" style="letter-spacing:-0.3px">AA3615003952</span></span></div>
<div class="cell" style="left:983px;width:119px"><span class="" style="position:absolute;left:2px;top:0">阿联酋</span></div>
<div class="cell" style="left:1103px;width:119px"><span class="" style="position:absolute;left:3px;top:0">张三三</span></div>
<div class="cell" style="left:1223px;width:119px"><span class="" style="position:absolute;left:3px;top:0">香港<span class="l"><span style="letter-spacing:-0.9px">DHL</span></span>代理</span></div>
<div class="cell" style="left:1463px;width:36px"><span class="" style="position:absolute;left:4px;top:0"><span class="l">2024-05-24</span></span></div>
</div>
<div class="row" style="top:134px;background:#ffe0c0">
<div class="ab" style="left:0;top:0;width:324px;height:26px;background:#f7d9b9"></div>
<div class="ck" style="left:14px;top:6px"></div>
<div class="cell" style="left:69px;width:134px"><span class="" style="position:absolute;left:3px;top:0"><span class="l">2024-05-24 18:20:08</span></span></div>
<div class="cell" style="left:204px;width:120px"><span class="" style="position:absolute;left:5px;top:0"><span class="l" style="letter-spacing:-0.3px">AA2405249129</span></span></div>
<div class="cell" style="left:325px;width:122px"><span class="" style="position:absolute;left:-3px;top:0"><span class="l">2024-05-24 18:19:48</span></span></div>
<div class="cell" style="left:613px;width:129px"><span class="" style="position:absolute;left:4px;top:0">已入仓</span></div>
<div class="cell" style="left:743px;width:119px"><span class="lnk" style="position:absolute;left:4px;top:0"><span class="l">2405249129</span></span></div>
<div class="cell" style="left:863px;width:119px"><span class="" style="position:absolute;left:3px;top:0"><span class="l">11111111</span></span></div>
<div class="cell" style="left:983px;width:119px"><span class="" style="position:absolute;left:2px;top:0">安道尔共和国</span></div>
<div class="cell" style="left:1103px;width:119px"><span class="" style="position:absolute;left:3px;top:0">张三三</span></div>
<div class="cell" style="left:1223px;width:119px"><span class="" style="position:absolute;left:3px;top:0">香港<span class="l"><span style="letter-spacing:-0.9px">DHL</span></span>代理</span></div>
</div>
<div class="row" style="top:161px;background:#ffe0c0">
<div class="ab" style="left:0;top:0;width:324px;height:26px;background:#f7d9b9"></div>
<div class="ck" style="left:14px;top:6px"></div>
<div class="cell" style="left:69px;width:134px"><span class="" style="position:absolute;left:3px;top:0"><span class="l">2024-05-24 18:18:50</span></span></div>
<div class="cell" style="left:204px;width:120px"><span class="" style="position:absolute;left:5px;top:0"><span class="l" style="letter-spacing:-0.3px">AA2405246070</span></span></div>
<div class="cell" style="left:325px;width:122px"><span class="" style="position:absolute;left:-3px;top:0"><span class="l">2024-05-24 18:18:30</span></span></div>
<div class="cell" style="left:613px;width:129px"><span class="" style="position:absolute;left:4px;top:0">已入仓</span></div>
<div class="cell" style="left:743px;width:119px"><span class="lnk" style="position:absolute;left:4px;top:0"><span class="l">2405246070</span></span></div>
<div class="cell" style="left:983px;width:119px"><span class="" style="position:absolute;left:2px;top:0">安道尔共和国</span></div>
<div class="cell" style="left:1103px;width:119px"><span class="" style="position:absolute;left:3px;top:0">张三三</span></div>
<div class="cell" style="left:1223px;width:119px"><span class="" style="position:absolute;left:3px;top:0">香港<span class="l"><span style="letter-spacing:-0.9px">DHL</span></span>代理</span></div>
</div>
<div class="row" style="top:188px;background:#ffe0c0">
<div class="ab" style="left:0;top:0;width:324px;height:26px;background:#f7d9b9"></div>
<div class="ck" style="left:14px;top:6px"></div>
<div class="cell" style="left:69px;width:134px"><span class="" style="position:absolute;left:3px;top:0"><span class="l">2024-05-24 18:17:21</span></span></div>
<div class="cell" style="left:204px;width:120px"><span class="" style="position:absolute;left:5px;top:0"><span class="l" style="letter-spacing:-0.3px">AA3614921138</span></span></div>
<div class="cell" style="left:325px;width:122px"><span class="" style="position:absolute;left:-3px;top:0"><span class="l">2024-05-24 18:17:24</span></span></div>
<div class="cell" style="left:613px;width:129px"><span class="" style="position:absolute;left:4px;top:0">已入仓</span></div>
<div class="cell" style="left:743px;width:119px"><span class="lnk" style="position:absolute;left:4px;top:0"><span class="l" style="letter-spacing:-0.3px">AA3614921138</span></span></div>
<div class="cell" style="left:983px;width:119px"><span class="" style="position:absolute;left:2px;top:0">安道尔共和国</span></div>
<div class="cell" style="left:1103px;width:119px"><span class="" style="position:absolute;left:3px;top:0">张三三</span></div>
<div class="cell" style="left:1223px;width:119px"><span class="" style="position:absolute;left:3px;top:0">香港<span class="l"><span style="letter-spacing:-0.9px">DHL</span></span>代理</span></div>
</div>
<div class="row" style="top:215px;background:#00ffff">
<div class="ab" style="left:0;top:0;width:324px;height:26px;background:#00fafa"></div>
<div class="ck" style="left:14px;top:6px"></div>
<div class="cell" style="left:69px;width:134px"><span class="" style="position:absolute;left:3px;top:0"><span class="l">2024-05-24 14:23:49</span></span></div>
<div class="cell" style="left:204px;width:120px"><span class="" style="position:absolute;left:5px;top:0"><span class="l">8745660140A</span></span></div>
<div class="cell" style="left:325px;width:122px"><span class="" style="position:absolute;left:-3px;top:0"><span class="l">2024-05-10 10:45:00</span></span></div>
<div class="cell" style="left:613px;width:129px"><span class="" style="position:absolute;left:4px;top:0">已出仓</span></div>
<div class="cell" style="left:743px;width:119px"><span class="lnk" style="position:absolute;left:4px;top:0"><span class="l" style="letter-spacing:-0.3px">TT8182664696</span></span></div>
<div class="cell" style="left:983px;width:119px"><span class="" style="position:absolute;left:2px;top:0">美国</span></div>
<div class="cell" style="left:1103px;width:119px"><span class="" style="position:absolute;left:3px;top:0">张三三</span></div>
<div class="cell" style="left:1223px;width:119px"><span class="" style="position:absolute;left:3px;top:0">香港<span class="l"><span style="letter-spacing:-0.9px">DHL</span></span>代理</span></div>
<div class="cell" style="left:1463px;width:36px"><span class="" style="position:absolute;left:4px;top:0"><span class="l">2024-05-24</span></span></div>
</div>
<div class="row" style="top:242px;background:#ffe0c0">
<div class="ab" style="left:0;top:0;width:324px;height:26px;background:#f7d9b9"></div>
<div class="ck" style="left:14px;top:6px"></div>
<div class="cell" style="left:69px;width:134px"><span class="" style="position:absolute;left:3px;top:0"><span class="l">2024-05-24 14:20:53</span></span></div>
<div class="cell" style="left:204px;width:120px"><span class="" style="position:absolute;left:5px;top:0"><span class="l" style="letter-spacing:-0.3px">TT8182664685</span></span></div>
<div class="cell" style="left:325px;width:122px"><span class="" style="position:absolute;left:-3px;top:0"><span class="l">2024-05-10 10:45:00</span></span></div>
<div class="cell" style="left:613px;width:129px"><span class="" style="position:absolute;left:4px;top:0">已入仓</span></div>
<div class="cell" style="left:743px;width:119px"><span class="lnk" style="position:absolute;left:4px;top:0"><span class="l" style="letter-spacing:-0.3px">TT8182664685</span></span></div>
<div class="cell" style="left:863px;width:119px"><span class="" style="position:absolute;left:3px;top:0"><span class="l">8745660140</span></span></div>
<div class="cell" style="left:983px;width:119px"><span class="" style="position:absolute;left:2px;top:0">美国</span></div>
<div class="cell" style="left:1103px;width:119px"><span class="" style="position:absolute;left:3px;top:0">张三三</span></div>
<div class="cell" style="left:1223px;width:119px"><span class="" style="position:absolute;left:3px;top:0">香港<span class="l"><span style="letter-spacing:-0.9px">DHL</span></span>代理</span></div>
</div>
<div class="row" style="top:269px;background:#00ffff">
<div class="ab" style="left:0;top:0;width:324px;height:26px;background:#00fafa"></div>
<div class="ck" style="left:14px;top:6px"></div>
<div class="cell" style="left:69px;width:134px"><span class="" style="position:absolute;left:3px;top:0"><span class="l">2024-05-24 12:34:18</span></span></div>
<div class="cell" style="left:204px;width:120px"><span class="" style="position:absolute;left:5px;top:0"><span class="l">8745660140</span></span></div>
<div class="cell" style="left:325px;width:122px"><span class="" style="position:absolute;left:-3px;top:0"><span class="l">2024-05-10 10:45:00</span></span></div>
<div class="cell" style="left:613px;width:129px"><span class="" style="position:absolute;left:4px;top:0">已出仓</span></div>
<div class="cell" style="left:743px;width:119px"><span class="lnk" style="position:absolute;left:4px;top:0"><span class="l" style="letter-spacing:-0.3px">TT81826646742</span></span></div>
<div class="cell" style="left:983px;width:119px"><span class="" style="position:absolute;left:2px;top:0">美国</span></div>
<div class="cell" style="left:1103px;width:119px"><span class="" style="position:absolute;left:3px;top:0">张三三</span></div>
<div class="cell" style="left:1223px;width:119px"><span class="" style="position:absolute;left:3px;top:0">香港<span class="l"><span style="letter-spacing:-0.9px">DHL</span></span>代理</span></div>
<div class="cell" style="left:1463px;width:36px"><span class="" style="position:absolute;left:4px;top:0"><span class="l">2024-05-24</span></span></div>
</div>
<div class="row" style="top:296px;background:#ffe0c0">
<div class="ab" style="left:0;top:0;width:324px;height:26px;background:#f7d9b9"></div>
<div class="ck" style="left:14px;top:6px"></div>
<div class="cell" style="left:69px;width:134px"><span class="" style="position:absolute;left:3px;top:0"><span class="l">2024-05-24 12:33:50</span></span></div>
<div class="cell" style="left:204px;width:120px"><span class="" style="position:absolute;left:5px;top:0"><span class="l" style="letter-spacing:-0.3px">TT9902256884</span></span></div>
<div class="cell" style="left:325px;width:122px"><span class="" style="position:absolute;left:-3px;top:0"><span class="l">2024-05-10 10:45:00</span></span></div>
<div class="cell" style="left:613px;width:129px"><span class="" style="position:absolute;left:4px;top:0">已入仓</span></div>
<div class="cell" style="left:743px;width:119px"><span class="lnk" style="position:absolute;left:4px;top:0"><span class="l" style="letter-spacing:-0.3px">TT9902256884</span></span></div>
<div class="cell" style="left:863px;width:119px"><span class="" style="position:absolute;left:3px;top:0"><span class="l">8745660140</span></span></div>
<div class="cell" style="left:983px;width:119px"><span class="" style="position:absolute;left:2px;top:0">美国</span></div>
<div class="cell" style="left:1103px;width:119px"><span class="" style="position:absolute;left:3px;top:0">张三三</span></div>
<div class="cell" style="left:1223px;width:119px"><span class="" style="position:absolute;left:3px;top:0">香港<span class="l"><span style="letter-spacing:-0.9px">DHL</span></span>代理</span></div>
</div>
<div class="row" style="top:323px;background:#ffe0c0">
<div class="ab" style="left:0;top:0;width:324px;height:26px;background:#f7d9b9"></div>
<div class="ck" style="left:14px;top:6px"></div>
<div class="cell" style="left:69px;width:134px"><span class="" style="position:absolute;left:3px;top:0"><span class="l">2024-05-24 12:32:09</span></span></div>
<div class="cell" style="left:204px;width:120px"><span class="" style="position:absolute;left:5px;top:0"><span class="l" style="letter-spacing:-0.3px">TT9902256895</span></span></div>
<div class="cell" style="left:325px;width:122px"><span class="" style="position:absolute;left:-3px;top:0"><span class="l">2024-05-10 10:45:00</span></span></div>
<div class="cell" style="left:613px;width:129px"><span class="" style="position:absolute;left:4px;top:0">已入仓</span></div>
<div class="cell" style="left:743px;width:119px"><span class="lnk" style="position:absolute;left:4px;top:0"><span class="l" style="letter-spacing:-0.3px">TT9902256895</span></span></div>
<div class="cell" style="left:863px;width:119px"><span class="" style="position:absolute;left:3px;top:0"><span class="l">8745660140</span></span></div>
<div class="cell" style="left:983px;width:119px"><span class="" style="position:absolute;left:2px;top:0">美国</span></div>
<div class="cell" style="left:1103px;width:119px"><span class="" style="position:absolute;left:3px;top:0">张三三</span></div>
<div class="cell" style="left:1223px;width:119px"><span class="" style="position:absolute;left:3px;top:0">香港<span class="l"><span style="letter-spacing:-0.9px">DHL</span></span>代理</span></div>
</div>
<div class="row" style="top:350px;background:#00ffff">
<div class="ab" style="left:0;top:0;width:324px;height:26px;background:#00fafa"></div>
<div class="ck" style="left:14px;top:6px"></div>
<div class="cell" style="left:69px;width:134px"><span class="" style="position:absolute;left:3px;top:0"><span class="l">2024-05-24 12:14:43</span></span></div>
<div class="cell" style="left:204px;width:120px"><span class="" style="position:absolute;left:5px;top:0"><span class="l" style="letter-spacing:-0.3px">AA3610916421</span></span></div>
<div class="cell" style="left:325px;width:122px"><span class="" style="position:absolute;left:-3px;top:0"><span class="l">2024-05-15 11:48:18</span></span></div>
<div class="cell" style="left:613px;width:129px"><span class="" style="position:absolute;left:4px;top:0">已出仓</span></div>
<div class="cell" style="left:743px;width:119px"><span class="lnk" style="position:absolute;left:4px;top:0"><span class="l" style="letter-spacing:-0.3px">AA3610916421</span></span></div>
<div class="cell" style="left:983px;width:119px"><span class="" style="position:absolute;left:2px;top:0">安道尔共和国</span></div>
<div class="cell" style="left:1103px;width:119px"><span class="" style="position:absolute;left:3px;top:0">张三三</span></div>
<div class="cell" style="left:1223px;width:119px"><span class="" style="position:absolute;left:3px;top:0">香港<span class="l"><span style="letter-spacing:-0.9px">DHL</span></span>代理</span></div>
<div class="cell" style="left:1463px;width:36px"><span class="" style="position:absolute;left:4px;top:0"><span class="l">2024-05-24</span></span></div>
</div>
<div class="row" style="top:377px;background:#00ffff">
<div class="ab" style="left:0;top:0;width:324px;height:26px;background:#00fafa"></div>
<div class="ck" style="left:14px;top:6px"></div>
<div class="cell" style="left:69px;width:134px"><span class="" style="position:absolute;left:3px;top:0"><span class="l">2024-05-24 11:36:30</span></span></div>
<div class="cell" style="left:204px;width:120px"><span class="" style="position:absolute;left:5px;top:0"><span class="l" style="letter-spacing:-0.3px">TT9902256921</span></span></div>
<div class="cell" style="left:325px;width:122px"><span class="" style="position:absolute;left:-3px;top:0"><span class="l">2024-05-10 10:45:00</span></span></div>
<div class="cell" style="left:613px;width:129px"><span class="" style="position:absolute;left:4px;top:0">已出仓</span></div>
<div class="cell" style="left:743px;width:119px"><span class="lnk" style="position:absolute;left:4px;top:0"><span class="l" style="letter-spacing:-0.3px">TT9902256921</span></span></div>
<div class="cell" style="left:983px;width:119px"><span class="" style="position:absolute;left:2px;top:0">美国</span></div>
<div class="cell" style="left:1103px;width:119px"><span class="" style="position:absolute;left:3px;top:0">张三三</span></div>
<div class="cell" style="left:1223px;width:119px"><span class="" style="position:absolute;left:3px;top:0">香港<span class="l"><span style="letter-spacing:-0.9px">DHL</span></span>代理</span></div>
<div class="cell" style="left:1463px;width:36px"><span class="" style="position:absolute;left:4px;top:0"><span class="l">2024-05-24</span></span></div>
</div>
<div class="row" style="top:404px;background:#fffb80">
<div class="ab" style="left:0;top:0;width:324px;height:26px;background:#f7f47b"></div>
<div class="ck" style="left:14px;top:6px"></div>
<div class="cell" style="left:69px;width:134px"><span class="" style="position:absolute;left:3px;top:0"><span class="l">2024-05-24 11:23:00</span></span></div>
<div class="cell" style="left:204px;width:120px"><span class="" style="position:absolute;left:5px;top:0"><span class="l" style="letter-spacing:-0.3px">AA3610888848</span></span></div>
<div class="cell" style="left:325px;width:122px"><span class="" style="position:absolute;left:-3px;top:0"><span class="l">2024-05-15 10:18:09</span></span></div>
<div class="cell" style="left:613px;width:129px"><span class="" style="position:absolute;left:4px;top:0">已上网</span></div>
<div class="cell" style="left:743px;width:119px"><span class="lnk" style="position:absolute;left:4px;top:0"><span class="l" style="letter-spacing:-0.3px">AA3610888848</span></span></div>
<div class="cell" style="left:863px;width:119px"><span class="" style="position:absolute;left:3px;top:0"><span class="l">8745660140</span></span></div>
<div class="cell" style="left:983px;width:119px"><span class="" style="position:absolute;left:2px;top:0">美国</span></div>
<div class="cell" style="left:1103px;width:119px"><span class="" style="position:absolute;left:3px;top:0">张三三</span></div>
<div class="cell" style="left:1223px;width:119px"><span class="" style="position:absolute;left:3px;top:0">香港<span class="l"><span style="letter-spacing:-0.9px">DHL</span></span>代理</span></div>
<div class="cell" style="left:1463px;width:36px"><span class="" style="position:absolute;left:4px;top:0"><span class="l">2024-05-24</span></span></div>
</div>
<div class="row" style="top:431px;background:#ffffff">
<div class="ab" style="left:0;top:0;width:324px;height:26px;background:#ffffff"></div>
<div class="ck" style="left:14px;top:6px"></div>
<div class="cell" style="left:69px;width:134px"><span class="" style="position:absolute;left:3px;top:0"><span class="l">2024-05-24 11:21:01</span></span></div>
<div class="cell" style="left:204px;width:120px"><span class="" style="position:absolute;left:5px;top:0"><span class="l" style="letter-spacing:-0.3px">AAAA051109</span></span></div>
<div class="cell" style="left:325px;width:122px"><span class="" style="position:absolute;left:-3px;top:0"><span class="l">2024-05-11 09:38:49</span></span></div>
<div class="cell" style="left:613px;width:129px"><span class="" style="position:absolute;left:4px;top:0">已入仓【财务扣件】</span></div>
<div class="cell" style="left:743px;width:119px"><span class="lnk" style="position:absolute;left:4px;top:0"><span class="l" style="letter-spacing:-0.3px">AA051109</span></span></div>
<div class="cell" style="left:863px;width:119px"><span class="" style="position:absolute;left:3px;top:0"><span class="l">8745660140</span></span></div>
<div class="cell" style="left:983px;width:119px"><span class="" style="position:absolute;left:2px;top:0">美国</span></div>
<div class="cell" style="left:1103px;width:119px"><span class="" style="position:absolute;left:3px;top:0">赵六</span></div>
<div class="cell" style="left:1223px;width:119px"><span class="" style="position:absolute;left:3px;top:0">香港<span class="l"><span style="letter-spacing:-0.9px">DHL</span></span>代理</span></div>
</div>
<div class="row" style="top:458px;background:#ffe0c0">
<div class="ab" style="left:0;top:0;width:324px;height:26px;background:#f7d9b9"></div>
<div class="ck" style="left:14px;top:6px"></div>
<div class="cell" style="left:69px;width:134px"><span class="" style="position:absolute;left:3px;top:0"><span class="l">2024-05-24 11:18:26</span></span></div>
<div class="cell" style="left:204px;width:120px"><span class="" style="position:absolute;left:5px;top:0"><span class="l" style="letter-spacing:-0.68px">ABCDEF2405117545</span></span></div>
<div class="cell" style="left:325px;width:122px"><span class="" style="position:absolute;left:-3px;top:0"><span class="l">2024-05-11 18:39:01</span></span></div>
<div class="cell" style="left:613px;width:129px"><span class="" style="position:absolute;left:4px;top:0">已入仓</span></div>
<div class="cell" style="left:743px;width:119px"><span class="lnk" style="position:absolute;left:4px;top:0"><span class="l">24051175454</span></span></div>
<div class="cell" style="left:983px;width:119px"><span class="" style="position:absolute;left:2px;top:0">阿富汗</span></div>
<div class="cell" style="left:1103px;width:119px"><span class="" style="position:absolute;left:3px;top:0">张三三</span></div>
<div class="cell" style="left:1223px;width:119px"><span class="" style="position:absolute;left:3px;top:0">大陆<span class="l"><span style="letter-spacing:-0.9px">DHL</span>1231A</span></span></div>
</div>
<div class="row" style="top:485px;background:#ffe0c0">
<div class="ab" style="left:0;top:0;width:324px;height:26px;background:#f7d9b9"></div>
<div class="ck" style="left:14px;top:6px"></div>
<div class="cell" style="left:69px;width:134px"><span class="" style="position:absolute;left:3px;top:0"><span class="l">2024-05-24 10:56:48</span></span></div>
<div class="cell" style="left:204px;width:120px"><span class="" style="position:absolute;left:5px;top:0"><span class="l" style="letter-spacing:-0.3px">AA3614789007</span></span></div>
<div class="cell" style="left:325px;width:122px"><span class="" style="position:absolute;left:-3px;top:0"><span class="l">2024-05-24 10:56:49</span></span></div>
<div class="cell" style="left:613px;width:129px"><span class="" style="position:absolute;left:4px;top:0">已入仓</span></div>
<div class="cell" style="left:743px;width:119px"><span class="lnk" style="position:absolute;left:4px;top:0"><span class="l" style="letter-spacing:-0.3px">AA3614789007</span></span></div>
<div class="cell" style="left:863px;width:119px"><span class="" style="position:absolute;left:3px;top:0"><span class="l">8745660140</span></span></div>
<div class="cell" style="left:983px;width:119px"><span class="" style="position:absolute;left:2px;top:0">安道尔共和国</span></div>
<div class="cell" style="left:1103px;width:119px"><span class="" style="position:absolute;left:3px;top:0">张三三</span></div>
<div class="cell" style="left:1223px;width:119px"><span class="" style="position:absolute;left:3px;top:0">香港<span class="l"><span style="letter-spacing:-0.9px">DHL</span></span>代理</span></div>
</div>
<div class="row" style="top:512px;background:#00ffff">
<div class="ab" style="left:0;top:0;width:324px;height:26px;background:#00fafa"></div>
<div class="ck" style="left:14px;top:6px"></div>
<div class="cell" style="left:69px;width:134px"><span class="" style="position:absolute;left:3px;top:0"><span class="l">2024-05-24 00:27:19</span></span></div>
<div class="cell" style="left:204px;width:120px"><span class="" style="position:absolute;left:5px;top:0"><span class="l" style="letter-spacing:-0.3px">AA3614600105</span></span></div>
<div class="cell" style="left:325px;width:122px"><span class="" style="position:absolute;left:-3px;top:0"><span class="l">2024-05-24 00:27:22</span></span></div>
<div class="cell" style="left:613px;width:129px"><span class="" style="position:absolute;left:4px;top:0">已出仓</span></div>
<div class="cell" style="left:743px;width:119px"><span class="lnk" style="position:absolute;left:4px;top:0"><span class="l" style="letter-spacing:-0.3px">AA3614600105</span></span></div>
<div class="cell" style="left:983px;width:119px"><span class="" style="position:absolute;left:2px;top:0">阿联酋</span></div>
<div class="cell" style="left:1103px;width:119px"><span class="" style="position:absolute;left:3px;top:0">张三三</span></div>
<div class="cell" style="left:1223px;width:119px"><span class="" style="position:absolute;left:3px;top:0">香港<span class="l"><span style="letter-spacing:-0.9px">DHL</span></span>代理</span></div>
<div class="cell" style="left:1463px;width:36px"><span class="" style="position:absolute;left:4px;top:0"><span class="l">2024-05-24</span></span></div>
</div>
<div class="row" style="top:539px;background:#ffffff">
<div class="ab" style="left:0;top:0;width:324px;height:26px;background:#ffffff"></div>
<div class="ck" style="left:14px;top:6px"></div>
<div class="cell" style="left:69px;width:134px"><span class="" style="position:absolute;left:3px;top:0"><span class="l">2024-05-24 00:06:36</span></span></div>
<div class="cell" style="left:204px;width:120px"><span class="" style="position:absolute;left:5px;top:0"><span class="l" style="letter-spacing:-0.3px">AA3614593920</span></span></div>
<div class="cell" style="left:325px;width:122px"><span class="" style="position:absolute;left:-3px;top:0"><span class="l">2024-05-24 00:06:40</span></span></div>
<div class="cell" style="left:613px;width:129px"><span class="" style="position:absolute;left:4px;top:0">已签收</span></div>
<div class="cell" style="left:743px;width:119px"><span class="lnk" style="position:absolute;left:4px;top:0"><span class="l" style="letter-spacing:-0.3px">AA3614593920</span></span></div>
<div class="cell" style="left:863px;width:119px"><span class="" style="position:absolute;left:3px;top:0"><span class="l">7517350971</span></span></div>
<div class="cell" style="left:983px;width:119px"><span class="" style="position:absolute;left:2px;top:0">阿联酋</span></div>
<div class="cell" style="left:1103px;width:119px"><span class="" style="position:absolute;left:3px;top:0">张三三</span></div>
<div class="cell" style="left:1223px;width:119px"><span class="" style="position:absolute;left:3px;top:0">香港<span class="l"><span style="letter-spacing:-0.9px">DHL</span></span>代理</span></div>
<div class="cell" style="left:1463px;width:36px"><span class="" style="position:absolute;left:4px;top:0"><span class="l">2024-05-24</span></span></div>
</div>
<div class="row" style="top:566px;background:#ffe0c0">
<div class="ab" style="left:0;top:0;width:324px;height:26px;background:#f7d9b9"></div>
<div class="ck" style="left:14px;top:6px"></div>
<div class="cell" style="left:69px;width:134px"><span class="" style="position:absolute;left:3px;top:0"><span class="l">2024-05-23 23:51:04</span></span></div>
<div class="cell" style="left:204px;width:120px"><span class="" style="position:absolute;left:5px;top:0"><span class="l" style="letter-spacing:-0.3px">AA3614589260</span></span></div>
<div class="cell" style="left:325px;width:122px"><span class="" style="position:absolute;left:-3px;top:0"><span class="l">2024-05-23 23:51:07</span></span></div>
<div class="cell" style="left:613px;width:129px"><span class="" style="position:absolute;left:4px;top:0">已入仓</span></div>
<div class="cell" style="left:743px;width:119px"><span class="lnk" style="position:absolute;left:4px;top:0"><span class="l" style="letter-spacing:-0.3px">AA3614589260</span></span></div>
<div class="cell" style="left:863px;width:119px"><span class="" style="position:absolute;left:3px;top:0"><span class="l">8745660140</span></span></div>
<div class="cell" style="left:983px;width:119px"><span class="" style="position:absolute;left:2px;top:0">阿联酋</span></div>
<div class="cell" style="left:1103px;width:119px"><span class="" style="position:absolute;left:3px;top:0">张三三</span></div>
<div class="cell" style="left:1223px;width:119px"><span class="" style="position:absolute;left:3px;top:0">香港<span class="l"><span style="letter-spacing:-0.9px">DHL</span></span>代理</span></div>
</div>
<div class="row" style="top:593px;background:#ffffff">
<div class="ab" style="left:0;top:0;width:324px;height:26px;background:#ffffff"></div>
<div class="ck" style="left:14px;top:6px"></div>
<div class="cell" style="left:69px;width:134px"><span class="" style="position:absolute;left:3px;top:0"><span class="l">2024-05-23 23:48:16</span></span></div>
<div class="cell" style="left:204px;width:120px"><span class="" style="position:absolute;left:5px;top:0"><span class="l" style="letter-spacing:-0.3px">AA3614588449</span></span></div>
<div class="cell" style="left:325px;width:122px"><span class="" style="position:absolute;left:-3px;top:0"><span class="l">2024-05-23 23:48:17</span></span></div>
<div class="cell" style="left:613px;width:129px"><span class="" style="position:absolute;left:4px;top:0">已签收</span></div>
<div class="cell" style="left:743px;width:119px"><span class="lnk" style="position:absolute;left:4px;top:0"><span class="l" style="letter-spacing:-0.3px">AA3614588449</span></span></div>
<div class="cell" style="left:863px;width:119px"><span class="" style="position:absolute;left:3px;top:0"><span class="l">8745660140</span></span></div>
<div class="cell" style="left:983px;width:119px"><span class="" style="position:absolute;left:2px;top:0">阿联酋</span></div>
<div class="cell" style="left:1103px;width:119px"><span class="" style="position:absolute;left:3px;top:0">张三三</span></div>
<div class="cell" style="left:1223px;width:119px"><span class="" style="position:absolute;left:3px;top:0">香港<span class="l"><span style="letter-spacing:-0.9px">DHL</span></span>代理</span></div>
</div>
<div class="row" style="top:620px;background:#ffe0c0">
<div class="ab" style="left:0;top:0;width:324px;height:26px;background:#f7d9b9"></div>
<div class="ck" style="left:14px;top:6px"></div>
<div class="cell" style="left:69px;width:134px"><span class="" style="position:absolute;left:3px;top:0"><span class="l">2024-05-23 23:47:18</span></span></div>
<div class="cell" style="left:204px;width:120px"><span class="" style="position:absolute;left:5px;top:0"><span class="l" style="letter-spacing:-0.3px">AA3614588152</span></span></div>
<div class="cell" style="left:325px;width:122px"><span class="" style="position:absolute;left:-3px;top:0"><span class="l">2024-05-23 23:47:25</span></span></div>
<div class="cell" style="left:613px;width:129px"><span class="" style="position:absolute;left:4px;top:0">已入仓</span></div>
<div class="cell" style="left:743px;width:119px"><span class="lnk" style="position:absolute;left:4px;top:0"><span class="l" style="letter-spacing:-0.3px">AA3614588152</span></span></div>
<div class="cell" style="left:863px;width:119px"><span class="" style="position:absolute;left:3px;top:0"><span class="l" style="letter-spacing:-0.45px">ASDASD23423423...</span></span></div>
<div class="cell" style="left:983px;width:119px"><span class="" style="position:absolute;left:2px;top:0">安道尔共和国</span></div>
<div class="cell" style="left:1103px;width:119px"><span class="" style="position:absolute;left:3px;top:0">张三三</span></div>
<div class="cell" style="left:1223px;width:119px"><span class="" style="position:absolute;left:3px;top:0">香港<span class="l"><span style="letter-spacing:-0.9px">DHL</span></span>代理</span></div>
</div>
<div class="row" style="top:647px;background:#ffffff">
<div class="ab" style="left:0;top:0;width:324px;height:26px;background:#ffffff"></div>
<div class="ck" style="left:14px;top:6px"></div>
<div class="cell" style="left:69px;width:134px"><span class="" style="position:absolute;left:3px;top:0"><span class="l">2024-05-23 23:46:34</span></span></div>
<div class="cell" style="left:204px;width:120px"><span class="" style="position:absolute;left:5px;top:0"><span class="l" style="letter-spacing:-0.3px">AA3614587920</span></span></div>
<div class="cell" style="left:325px;width:122px"><span class="" style="position:absolute;left:-3px;top:0"><span class="l">2024-05-23 23:46:35</span></span></div>
<div class="cell" style="left:613px;width:129px"><span class="" style="position:absolute;left:4px;top:0">已提取</span></div>
<div class="cell" style="left:743px;width:119px"><span class="lnk" style="position:absolute;left:4px;top:0"><span class="l" style="letter-spacing:-0.3px">AA3614587920</span></span></div>
<div class="cell" style="left:863px;width:119px"><span class="" style="position:absolute;left:3px;top:0"><span class="l">3123123</span></span></div>
<div class="cell" style="left:983px;width:119px"><span class="" style="position:absolute;left:2px;top:0">安道尔共和国</span></div>
<div class="cell" style="left:1103px;width:119px"><span class="" style="position:absolute;left:3px;top:0">张三三</span></div>
<div class="cell" style="left:1223px;width:119px"><span class="" style="position:absolute;left:3px;top:0">香港<span class="l"><span style="letter-spacing:-0.9px">DHL</span></span>代理</span></div>
</div>
<div class="row" style="top:674px;background:#ffffff">
<div class="ab" style="left:0;top:0;width:324px;height:26px;background:#ffffff"></div>
<div class="ck" style="left:14px;top:6px"></div>
<div class="cell" style="left:69px;width:134px"><span class="" style="position:absolute;left:3px;top:0"><span class="l">2024-05-23 23:33:34</span></span></div>
<div class="cell" style="left:204px;width:120px"><span class="" style="position:absolute;left:5px;top:0"><span class="l" style="letter-spacing:-0.68px">ABCDEF3614583979</span></span></div>
<div class="cell" style="left:325px;width:122px"><span class="" style="position:absolute;left:-3px;top:0"><span class="l">2024-05-23 23:33:36</span></span></div>
<div class="cell" style="left:613px;width:129px"><span class="" style="position:absolute;left:4px;top:0">已签收</span></div>
<div class="cell" style="left:743px;width:119px"><span class="lnk" style="position:absolute;left:4px;top:0"><span class="l" style="letter-spacing:-0.45px">ABCDEF36145839...</span></span></div>
<div class="cell" style="left:863px;width:119px"><span class="" style="position:absolute;left:3px;top:0"><span class="l">8745660140</span></span></div>
<div class="cell" style="left:983px;width:119px"><span class="" style="position:absolute;left:2px;top:0">阿联酋</span></div>
<div class="cell" style="left:1103px;width:119px"><span class="" style="position:absolute;left:3px;top:0">张三三</span></div>
<div class="cell" style="left:1223px;width:119px"><span class="" style="position:absolute;left:3px;top:0">大陆<span class="l"><span style="letter-spacing:-0.9px">DHL</span>1231A</span></span></div>
</div>
<div class="row" style="top:701px;background:#ffffff">
<div class="ab" style="left:0;top:0;width:324px;height:26px;background:#ffffff"></div>
<div class="ck" style="left:14px;top:6px"></div>
<div class="cell" style="left:69px;width:134px"><span class="" style="position:absolute;left:3px;top:0"><span class="l">2024-05-23 19:16:45</span></span></div>
<div class="cell" style="left:204px;width:120px"><span class="" style="position:absolute;left:5px;top:0"><span class="l" style="letter-spacing:-0.68px">ABCDEF3614506288</span></span></div>
<div class="cell" style="left:325px;width:122px"><span class="" style="position:absolute;left:-3px;top:0"><span class="l">2024-05-23 19:16:49</span></span></div>
<div class="cell" style="left:613px;width:129px"><span class="" style="position:absolute;left:4px;top:0">已签收</span></div>
<div class="cell" style="left:743px;width:119px"><span class="lnk" style="position:absolute;left:4px;top:0"><span class="l" style="letter-spacing:-0.45px">ABCDEF36145062...</span></span></div>
<div class="cell" style="left:863px;width:119px"><span class="" style="position:absolute;left:3px;top:0"><span class="l">8745660140</span></span></div>
<div class="cell" style="left:983px;width:119px"><span class="" style="position:absolute;left:2px;top:0">阿联酋</span></div>
<div class="cell" style="left:1103px;width:119px"><span class="" style="position:absolute;left:3px;top:0">张三三</span></div>
<div class="cell" style="left:1223px;width:119px"><span class="" style="position:absolute;left:3px;top:0">大陆<span class="l"><span style="letter-spacing:-0.9px">DHL</span>1231A</span></span></div>
<div class="cell" style="left:1463px;width:36px"><span class="" style="position:absolute;left:4px;top:0"><span class="l">2024-05-24</span></span></div>
</div>
<div class="row" style="top:728px;background:#fffb80">
<div class="ab" style="left:0;top:0;width:324px;height:26px;background:#f7f47b"></div>
<div class="ck" style="left:14px;top:6px"></div>
<div class="cell" style="left:69px;width:134px"><span class="" style="position:absolute;left:3px;top:0"><span class="l">2024-05-23 19:10:12</span></span></div>
<div class="cell" style="left:204px;width:120px"><span class="" style="position:absolute;left:5px;top:0"><span class="l" style="letter-spacing:-0.3px">AA3614504978</span></span></div>
<div class="cell" style="left:325px;width:122px"><span class="" style="position:absolute;left:-3px;top:0"><span class="l">2024-05-23 19:10:16</span></span></div>
<div class="cell" style="left:613px;width:129px"><span class="" style="position:absolute;left:4px;top:0">已上网</span></div>
<div class="cell" style="left:743px;width:119px"><span class="lnk" style="position:absolute;left:4px;top:0"><span class="l" style="letter-spacing:-0.3px">AA3614504978</span></span></div>
<div class="cell" style="left:863px;width:119px"><span class="" style="position:absolute;left:3px;top:0"><span class="l" style="letter-spacing:-0.9px">BBBBBBBB123</span></span></div>
<div class="cell" style="left:983px;width:119px"><span class="" style="position:absolute;left:2px;top:0">安提瓜和巴布达</span></div>
<div class="cell" style="left:1103px;width:119px"><span class="" style="position:absolute;left:3px;top:0">张三三</span></div>
<div class="cell" style="left:1223px;width:119px"><span class="" style="position:absolute;left:3px;top:0">香港<span class="l"><span style="letter-spacing:-0.9px">DHL</span></span>代理</span></div>
<div class="cell" style="left:1463px;width:36px"><span class="" style="position:absolute;left:4px;top:0"><span class="l">2024-05-24</span></span></div>
</div>
<div class="ab" style="left:40px;top:26px;width:1px;height:730px;background:#c8c8c8"></div>
<div class="ab" style="left:68px;top:26px;width:1px;height:730px;background:#c8c8c8"></div>
<div class="ab" style="left:203px;top:26px;width:1px;height:730px;background:#c8c8c8"></div>
<div class="ab" style="left:324px;top:26px;width:1px;height:730px;background:#c8c8c8"></div>
<div class="ab" style="left:447px;top:26px;width:1px;height:730px;background:#c8c8c8"></div>
<div class="ab" style="left:537px;top:26px;width:1px;height:730px;background:#c8c8c8"></div>
<div class="ab" style="left:612px;top:26px;width:1px;height:730px;background:#c8c8c8"></div>
<div class="ab" style="left:742px;top:26px;width:1px;height:730px;background:#c8c8c8"></div>
<div class="ab" style="left:862px;top:26px;width:1px;height:730px;background:#c8c8c8"></div>
<div class="ab" style="left:982px;top:26px;width:1px;height:730px;background:#c8c8c8"></div>
<div class="ab" style="left:1102px;top:26px;width:1px;height:730px;background:#c8c8c8"></div>
<div class="ab" style="left:1222px;top:26px;width:1px;height:730px;background:#c8c8c8"></div>
<div class="ab" style="left:1342px;top:26px;width:1px;height:730px;background:#c8c8c8"></div>
<div class="ab" style="left:1462px;top:26px;width:1px;height:730px;background:#c8c8c8"></div>
<div class="ab" style="left:324px;top:1px;width:1px;height:754px;background:#9a9a9a"></div>
<div class="ab" style="left:40px;top:1px;width:1px;height:25px;background:#a0a0a0"></div>
<div class="ab" style="left:68px;top:1px;width:1px;height:25px;background:#a0a0a0"></div>
<div class="ab" style="left:203px;top:1px;width:1px;height:25px;background:#a0a0a0"></div>
<div class="ab" style="left:324px;top:1px;width:1px;height:25px;background:#a0a0a0"></div>
<div class="ab" style="left:447px;top:1px;width:1px;height:25px;background:#a0a0a0"></div>
<div class="ab" style="left:537px;top:1px;width:1px;height:25px;background:#a0a0a0"></div>
<div class="ab" style="left:612px;top:1px;width:1px;height:25px;background:#a0a0a0"></div>
<div class="ab" style="left:742px;top:1px;width:1px;height:25px;background:#a0a0a0"></div>
<div class="ab" style="left:862px;top:1px;width:1px;height:25px;background:#a0a0a0"></div>
<div class="ab" style="left:982px;top:1px;width:1px;height:25px;background:#a0a0a0"></div>
<div class="ab" style="left:1102px;top:1px;width:1px;height:25px;background:#a0a0a0"></div>
<div class="ab" style="left:1222px;top:1px;width:1px;height:25px;background:#a0a0a0"></div>
<div class="ab" style="left:1342px;top:1px;width:1px;height:25px;background:#a0a0a0"></div>
<div class="ab" style="left:1462px;top:1px;width:1px;height:25px;background:#a0a0a0"></div>
<div class="ab" style="left:323px;top:1px;width:1px;height:25px;background:#a0a0a0"></div>
<div class="ab" style="left:0;top:0;width:1px;height:755px;background:#a0a0a0"></div>
</div>
<div class="ab" style="left:704px;top:220px;width:16px;height:8px;background:#ededed"></div><div class="ab" style="left:704px;top:228px;width:16px;height:20px;background:#f9f9f9"></div><div class="ab" style="left:720px;top:220px;width:15px;height:8px;background:#d6d6d6"></div><div class="ab" style="left:720px;top:228px;width:15px;height:20px;background:#dbdbdb"></div><div class="ab" style="left:735px;top:220px;width:15px;height:8px;background:#d9d9d9"></div><div class="ab" style="left:735px;top:228px;width:15px;height:20px;background:#dfdfdf"></div><div class="ab" style="left:750px;top:220px;width:18px;height:8px;background:#f1f1f1"></div><div class="ab" style="left:750px;top:228px;width:18px;height:20px;background:#fefefe"></div><div class="ab" style="left:1513px;top:220px;width:46px;height:28px;background:linear-gradient(90deg,#f1f1f1 0 17px,#dadada 17px 33px,#f9f9f9 33px 46px)"></div><div class="ab" style="left:704px;top:247px;width:16px;height:8px;background:#f8e9d9"></div><div class="ab" style="left:704px;top:255px;width:16px;height:20px;background:#f7d9ba"></div><div class="ab" style="left:720px;top:247px;width:15px;height:8px;background:#e5d7c8"></div><div class="ab" style="left:720px;top:255px;width:15px;height:20px;background:#dfc3a7"></div><div class="ab" style="left:735px;top:247px;width:15px;height:8px;background:#e9dbcc"></div><div class="ab" style="left:735px;top:255px;width:15px;height:20px;background:#e4c8ac"></div><div class="ab" style="left:750px;top:247px;width:18px;height:8px;background:#feeede"></div><div class="ab" style="left:750px;top:255px;width:18px;height:20px;background:#fedfbf"></div><div class="ab" style="left:1513px;top:247px;width:46px;height:28px;background:linear-gradient(90deg,#f8dabb 0 17px,#d8bea3 17px 33px,#edd0b2 33px 46px)"></div><div class="ab" style="left:704px;top:274px;width:16px;height:8px;background:#fbddbd"></div><div class="ab" style="left:704px;top:282px;width:16px;height:20px;background:#fbdcbd"></div><div class="ab" style="left:720px;top:274px;width:15px;height:8px;background:#e0c4a8"></div><div class="ab" style="left:720px;top:282px;width:15px;height:20px;background:#d8bea2"></div><div class="ab" style="left:735px;top:274px;width:15px;height:8px;background:#e5caad"></div><div class="ab" style="left:735px;top:282px;width:15px;height:20px;background:#dfc4a8"></div><div class="ab" style="left:750px;top:274px;width:18px;height:8px;background:#f9dabb"></div><div class="ab" style="left:750px;top:282px;width:18px;height:20px;background:#f7d9ba"></div><div class="ab" style="left:1513px;top:274px;width:46px;height:28px;background:linear-gradient(90deg,#f1d3b5 0 17px,#d9bea3 17px 33px,#eaceb0 33px 46px)"></div><div class="ab" style="left:704px;top:301px;width:16px;height:8px;background:#e4dbd7"></div><div class="ab" style="left:704px;top:309px;width:16px;height:20px;background:#ccdaf2"></div><div class="ab" style="left:720px;top:301px;width:15px;height:8px;background:#bab3b0"></div><div class="ab" style="left:720px;top:309px;width:15px;height:20px;background:#9da7ba"></div><div class="ab" style="left:735px;top:301px;width:15px;height:8px;background:#d6ceca"></div><div class="ab" style="left:735px;top:309px;width:15px;height:20px;background:#bcc9df"></div><div class="ab" style="left:750px;top:301px;width:18px;height:8px;background:#e6ddd9"></div><div class="ab" style="left:750px;top:309px;width:18px;height:20px;background:#cedcf3"></div><div class="ab" style="left:1513px;top:301px;width:46px;height:28px;background:linear-gradient(90deg,#c9d7ee 0 17px,#b2bed3 17px 33px,#c0cde4 33px 46px)"></div><div class="ab" style="left:704px;top:328px;width:16px;height:8px;background:#e3dad6"></div><div class="ab" style="left:704px;top:336px;width:16px;height:20px;background:#fadcbc"></div><div class="ab" style="left:720px;top:328px;width:15px;height:8px;background:#c1bab6"></div><div class="ab" style="left:720px;top:336px;width:15px;height:20px;background:#cbb299"></div><div class="ab" style="left:735px;top:328px;width:15px;height:8px;background:#d0c7c4"></div><div class="ab" style="left:735px;top:336px;width:15px;height:20px;background:#dfc4a8"></div><div class="ab" style="left:750px;top:328px;width:18px;height:8px;background:#e4dcd8"></div><div class="ab" style="left:750px;top:336px;width:18px;height:20px;background:#fcddbd"></div><div class="ab" style="left:1513px;top:328px;width:46px;height:28px;background:linear-gradient(90deg,#f1d4b5 0 17px,#e3c7ab 17px 33px,#f8dabb 33px 46px)"></div><div class="ab" style="left:704px;top:355px;width:16px;height:8px;background:#fbdcbd"></div><div class="ab" style="left:704px;top:363px;width:16px;height:20px;background:#fadbbc"></div><div class="ab" style="left:720px;top:355px;width:15px;height:8px;background:#d3b99e"></div><div class="ab" style="left:720px;top:363px;width:15px;height:20px;background:#c8af96"></div><div class="ab" style="left:735px;top:355px;width:15px;height:8px;background:#eacdb0"></div><div class="ab" style="left:735px;top:363px;width:15px;height:20px;background:#e4c8ac"></div><div class="ab" style="left:750px;top:355px;width:18px;height:8px;background:#fddebe"></div><div class="ab" style="left:750px;top:363px;width:18px;height:20px;background:#fcddbe"></div><div class="ab" style="left:1513px;top:355px;width:46px;height:28px;background:linear-gradient(90deg,#f0d3b5 0 17px,#d7bda2 17px 33px,#f5d7b8 33px 46px)"></div><div class="ab" style="left:704px;top:382px;width:16px;height:8px;background:#f6d8b9"></div><div class="ab" style="left:704px;top:390px;width:16px;height:20px;background:#f4d6b7"></div><div class="ab" style="left:720px;top:382px;width:15px;height:8px;background:#d2b89e"></div><div class="ab" style="left:720px;top:390px;width:15px;height:20px;background:#c7af96"></div><div class="ab" style="left:735px;top:382px;width:15px;height:8px;background:#edd0b3"></div><div class="ab" style="left:735px;top:390px;width:15px;height:20px;background:#e9cdaf"></div><div class="ab" style="left:750px;top:382px;width:18px;height:8px;background:#fbdcbd"></div><div class="ab" style="left:750px;top:390px;width:18px;height:20px;background:#fadcbc"></div><div class="ab" style="left:1513px;top:382px;width:46px;height:28px;background:linear-gradient(90deg,#f1d4b6 0 17px,#cab298 17px 33px,#eed1b3 33px 46px)"></div><div class="ab" style="left:704px;top:409px;width:16px;height:8px;background:#7ceadb"></div><div class="ab" style="left:704px;top:417px;width:16px;height:20px;background:#00f9f9"></div><div class="ab" style="left:720px;top:409px;width:15px;height:8px;background:#64bdb1"></div><div class="ab" style="left:720px;top:417px;width:15px;height:20px;background:#00bdbd"></div><div class="ab" style="left:735px;top:409px;width:15px;height:8px;background:#77e1d2"></div><div class="ab" style="left:735px;top:417px;width:15px;height:20px;background:#00ecec"></div><div class="ab" style="left:750px;top:409px;width:18px;height:8px;background:#7decdc"></div><div class="ab" style="left:750px;top:417px;width:18px;height:20px;background:#00fbfb"></div><div class="ab" style="left:1513px;top:409px;width:46px;height:28px;background:linear-gradient(90deg,#00eeee 0 17px,#00e0e0 17px 33px,#00f2f2 33px 46px)"></div><div class="ab" style="left:704px;top:436px;width:16px;height:8px;background:#7decdc"></div><div class="ab" style="left:704px;top:444px;width:16px;height:20px;background:#fcddbd"></div><div class="ab" style="left:720px;top:436px;width:15px;height:8px;background:#69c6b8"></div><div class="ab" style="left:720px;top:444px;width:15px;height:20px;background:#c8b096"></div><div class="ab" style="left:735px;top:436px;width:15px;height:8px;background:#71d4c6"></div><div class="ab" style="left:735px;top:444px;width:15px;height:20px;background:#dcc1a5"></div><div class="ab" style="left:750px;top:436px;width:18px;height:8px;background:#7debdb"></div><div class="ab" style="left:750px;top:444px;width:18px;height:20px;background:#fadcbc"></div><div class="ab" style="left:1513px;top:436px;width:46px;height:28px;background:linear-gradient(90deg,#eccfb2 0 17px,#dbc1a5 17px 33px,#efd2b4 33px 46px)"></div><div class="ab" style="left:704px;top:463px;width:16px;height:8px;background:#7be8d8"></div><div class="ab" style="left:704px;top:471px;width:16px;height:20px;background:#00f6f6"></div><div class="ab" style="left:720px;top:463px;width:15px;height:8px;background:#6ac8bb"></div><div class="ab" style="left:720px;top:471px;width:15px;height:20px;background:#00cbcb"></div><div class="ab" style="left:735px;top:463px;width:15px;height:8px;background:#74dacc"></div><div class="ab" style="left:735px;top:471px;width:15px;height:20px;background:#00e4e4"></div><div class="ab" style="left:750px;top:463px;width:18px;height:8px;background:#7ceada"></div><div class="ab" style="left:750px;top:471px;width:18px;height:20px;background:#00f8f8"></div><div class="ab" style="left:1513px;top:463px;width:46px;height:28px;background:linear-gradient(90deg,#00ebeb 0 17px,#00d6d6 17px 33px,#00efef 33px 46px)"></div><div class="ab" style="left:704px;top:490px;width:16px;height:8px;background:#7decdc"></div><div class="ab" style="left:704px;top:498px;width:16px;height:20px;background:#fbddbd"></div><div class="ab" style="left:720px;top:490px;width:15px;height:8px;background:#68c5b8"></div><div class="ab" style="left:720px;top:498px;width:15px;height:20px;background:#c7af96"></div><div class="ab" style="left:735px;top:490px;width:15px;height:8px;background:#72d7c8"></div><div class="ab" style="left:735px;top:498px;width:15px;height:20px;background:#dfc4a8"></div><div class="ab" style="left:750px;top:490px;width:18px;height:8px;background:#7be9d9"></div><div class="ab" style="left:750px;top:498px;width:18px;height:20px;background:#f7d9ba"></div><div class="ab" style="left:1513px;top:490px;width:46px;height:28px;background:linear-gradient(90deg,#edd0b2 0 17px,#dcc1a6 17px 33px,#f3d6b7 33px 46px)"></div><div class="ab" style="left:704px;top:517px;width:16px;height:8px;background:#f7d9ba"></div><div class="ab" style="left:704px;top:525px;width:16px;height:20px;background:#f5d7b8"></div><div class="ab" style="left:720px;top:517px;width:15px;height:8px;background:#e5c9ad"></div><div class="ab" style="left:720px;top:525px;width:15px;height:20px;background:#dfc4a8"></div><div class="ab" style="left:735px;top:517px;width:15px;height:8px;background:#e9ccaf"></div><div class="ab" style="left:735px;top:525px;width:15px;height:20px;background:#e3c8ab"></div><div class="ab" style="left:750px;top:517px;width:18px;height:8px;background:#fddfbf"></div><div class="ab" style="left:750px;top:525px;width:18px;height:20px;background:#fddebf"></div><div class="ab" style="left:1513px;top:517px;width:46px;height:28px;background:linear-gradient(90deg,#f8d9ba 0 17px,#e3c8ab 17px 33px,#eed1b3 33px 46px)"></div><div class="ab" style="left:704px;top:544px;width:16px;height:8px;background:#7decdc"></div><div class="ab" style="left:704px;top:552px;width:16px;height:20px;background:#00fbfb"></div><div class="ab" style="left:720px;top:544px;width:15px;height:8px;background:#6fd1c3"></div><div class="ab" style="left:720px;top:552px;width:15px;height:20px;background:#00d7d7"></div><div class="ab" style="left:735px;top:544px;width:15px;height:8px;background:#74dccd"></div><div class="ab" style="left:735px;top:552px;width:15px;height:20px;background:#00e5e5"></div><div class="ab" style="left:750px;top:544px;width:18px;height:8px;background:#7ceada"></div><div class="ab" style="left:750px;top:552px;width:18px;height:20px;background:#00f8f8"></div><div class="ab" style="left:1513px;top:544px;width:46px;height:28px;background:linear-gradient(90deg,#00f8f8 0 17px,#00d7d7 17px 33px,#00f1f1 33px 46px)"></div><div class="ab" style="left:704px;top:571px;width:16px;height:8px;background:#00f5f5"></div><div class="ab" style="left:704px;top:579px;width:16px;height:20px;background:#00f3f3"></div><div class="ab" style="left:720px;top:571px;width:15px;height:8px;background:#00cfcf"></div><div class="ab" style="left:720px;top:579px;width:15px;height:20px;background:#00c3c3"></div><div class="ab" style="left:735px;top:571px;width:15px;height:8px;background:#00e1e1"></div><div class="ab" style="left:735px;top:579px;width:15px;height:20px;background:#00d9d9"></div><div class="ab" style="left:750px;top:571px;width:18px;height:8px;background:#00fdfd"></div><div class="ab" style="left:750px;top:579px;width:18px;height:20px;background:#00fcfc"></div><div class="ab" style="left:1513px;top:571px;width:46px;height:28px;background:linear-gradient(90deg,#00f3f3 0 17px,#00dada 17px 33px,#00ecec 33px 46px)"></div><div class="ab" style="left:704px;top:598px;width:16px;height:8px;background:#7af3b7"></div><div class="ab" style="left:704px;top:606px;width:16px;height:20px;background:#f2ee79"></div><div class="ab" style="left:720px;top:598px;width:15px;height:8px;background:#70e0a9"></div><div class="ab" style="left:720px;top:606px;width:15px;height:20px;background:#dbd76d"></div><div class="ab" style="left:735px;top:598px;width:15px;height:8px;background:#77edb3"></div><div class="ab" style="left:735px;top:606px;width:15px;height:20px;background:#ebe776"></div><div class="ab" style="left:750px;top:598px;width:18px;height:8px;background:#7efbbd"></div><div class="ab" style="left:750px;top:606px;width:18px;height:20px;background:#fdf97f"></div><div class="ab" style="left:1513px;top:598px;width:46px;height:28px;background:linear-gradient(90deg,#f6f27b 0 17px,#d6d36b 17px 33px,#f0ed78 33px 46px)"></div><div class="ab" style="left:704px;top:625px;width:16px;height:8px;background:#faf8bb"></div><div class="ab" style="left:704px;top:633px;width:16px;height:20px;background:#f9f9f9"></div><div class="ab" style="left:720px;top:625px;width:15px;height:8px;background:#e6e4ac"></div><div class="ab" style="left:720px;top:633px;width:15px;height:20px;background:#e0e0e0"></div><div class="ab" style="left:735px;top:625px;width:15px;height:8px;background:#eae8af"></div><div class="ab" style="left:735px;top:633px;width:15px;height:20px;background:#e5e5e5"></div><div class="ab" style="left:750px;top:625px;width:18px;height:8px;background:#fcfabd"></div><div class="ab" style="left:750px;top:633px;width:18px;height:20px;background:#fcfcfc"></div><div class="ab" style="left:1513px;top:625px;width:46px;height:28px;background:linear-gradient(90deg,#f1f1f1 0 17px,#c8c8c8 17px 33px,#efefef 33px 46px)"></div><div class="ab" style="left:704px;top:652px;width:16px;height:8px;background:#f8e9d9"></div><div class="ab" style="left:704px;top:660px;width:16px;height:20px;background:#f7d9ba"></div><div class="ab" style="left:720px;top:652px;width:15px;height:8px;background:#d4c7ba"></div><div class="ab" style="left:720px;top:660px;width:15px;height:20px;background:#cab198"></div><div class="ab" style="left:735px;top:652px;width:15px;height:8px;background:#e4d6c8"></div><div class="ab" style="left:735px;top:660px;width:15px;height:20px;background:#dec3a7"></div><div class="ab" style="left:750px;top:652px;width:18px;height:8px;background:#feeede"></div><div class="ab" style="left:750px;top:660px;width:18px;height:20px;background:#fedfbf"></div><div class="ab" style="left:1513px;top:652px;width:46px;height:28px;background:linear-gradient(90deg,#eccfb1 0 17px,#cdb49a 17px 33px,#eccfb2 33px 46px)"></div><div class="ab" style="left:704px;top:679px;width:16px;height:8px;background:#f6d8b9"></div><div class="ab" style="left:704px;top:687px;width:16px;height:20px;background:#f4d6b7"></div><div class="ab" style="left:720px;top:679px;width:15px;height:8px;background:#dbc0a5"></div><div class="ab" style="left:720px;top:687px;width:15px;height:20px;background:#d2b89e"></div><div class="ab" style="left:735px;top:679px;width:15px;height:8px;background:#eaceb0"></div><div class="ab" style="left:735px;top:687px;width:15px;height:20px;background:#e5c9ac"></div><div class="ab" style="left:750px;top:679px;width:18px;height:8px;background:#fedfbf"></div><div class="ab" style="left:750px;top:687px;width:18px;height:20px;background:#fedfbf"></div><div class="ab" style="left:1513px;top:679px;width:46px;height:28px;background:linear-gradient(90deg,#f0d2b4 0 17px,#e3c7ab 17px 33px,#f8dabb 33px 46px)"></div><div class="ab" style="left:704px;top:706px;width:16px;height:8px;background:#7debdb"></div><div class="ab" style="left:704px;top:714px;width:16px;height:20px;background:#00fafa"></div><div class="ab" style="left:720px;top:706px;width:15px;height:8px;background:#70d3c5"></div><div class="ab" style="left:720px;top:714px;width:15px;height:20px;background:#00dada"></div><div class="ab" style="left:735px;top:706px;width:15px;height:8px;background:#75ddce"></div><div class="ab" style="left:735px;top:714px;width:15px;height:20px;background:#00e7e7"></div><div class="ab" style="left:750px;top:706px;width:18px;height:8px;background:#7eeede"></div><div class="ab" style="left:750px;top:714px;width:18px;height:20px;background:#00fefe"></div><div class="ab" style="left:1513px;top:706px;width:46px;height:28px;background:linear-gradient(90deg,#00f9f9 0 17px,#00e0e0 17px 33px,#00f8f8 33px 46px)"></div><div class="ab" style="left:704px;top:733px;width:16px;height:8px;background:#7cf9f9"></div><div class="ab" style="left:704px;top:741px;width:16px;height:20px;background:#f8f8f8"></div><div class="ab" style="left:720px;top:733px;width:15px;height:8px;background:#72e5e5"></div><div class="ab" style="left:720px;top:741px;width:15px;height:20px;background:#dfdfdf"></div><div class="ab" style="left:735px;top:733px;width:15px;height:8px;background:#70e0e0"></div><div class="ab" style="left:735px;top:741px;width:15px;height:20px;background:#d9d9d9"></div><div class="ab" style="left:750px;top:733px;width:18px;height:8px;background:#7dfbfb"></div><div class="ab" style="left:750px;top:741px;width:18px;height:20px;background:#fafafa"></div><div class="ab" style="left:1513px;top:733px;width:46px;height:28px;background:linear-gradient(90deg,#f7f7f7 0 17px,#dddddd 17px 33px,#f4f4f4 33px 46px)"></div><div class="ab" style="left:704px;top:760px;width:16px;height:8px;background:#f9eada"></div><div class="ab" style="left:704px;top:768px;width:16px;height:20px;background:#f8dabb"></div><div class="ab" style="left:720px;top:760px;width:15px;height:8px;background:#e3d4c6"></div><div class="ab" style="left:720px;top:768px;width:15px;height:20px;background:#dcc1a5"></div><div class="ab" style="left:735px;top:760px;width:15px;height:8px;background:#e1d3c5"></div><div class="ab" style="left:735px;top:768px;width:15px;height:20px;background:#dabfa4"></div><div class="ab" style="left:750px;top:760px;width:18px;height:8px;background:#f8e9d9"></div><div class="ab" style="left:750px;top:768px;width:18px;height:20px;background:#f7d9ba"></div><div class="ab" style="left:1513px;top:760px;width:46px;height:28px;background:linear-gradient(90deg,#f2d5b6 0 17px,#d6bca1 17px 33px,#f8dabb 33px 46px)"></div><div class="ab" style="left:704px;top:787px;width:16px;height:8px;background:#fcecdc"></div><div class="ab" style="left:704px;top:795px;width:16px;height:20px;background:#fbfbfb"></div><div class="ab" style="left:720px;top:787px;width:15px;height:8px;background:#dccec1"></div><div class="ab" style="left:720px;top:795px;width:15px;height:20px;background:#d4d4d4"></div><div class="ab" style="left:735px;top:787px;width:15px;height:8px;background:#eddecf"></div><div class="ab" style="left:735px;top:795px;width:15px;height:20px;background:#e8e8e8"></div><div class="ab" style="left:750px;top:787px;width:18px;height:8px;background:#f9eada"></div><div class="ab" style="left:750px;top:795px;width:18px;height:20px;background:#f8f8f8"></div><div class="ab" style="left:1513px;top:787px;width:46px;height:28px;background:linear-gradient(90deg,#f7f7f7 0 17px,#e4e4e4 17px 33px,#ebebeb 33px 46px)"></div><div class="ab" style="left:704px;top:814px;width:16px;height:8px;background:#f8e9d9"></div><div class="ab" style="left:704px;top:822px;width:16px;height:20px;background:#f7d9ba"></div><div class="ab" style="left:720px;top:814px;width:15px;height:8px;background:#e2d4c5"></div><div class="ab" style="left:720px;top:822px;width:15px;height:20px;background:#dbc0a5"></div><div class="ab" style="left:735px;top:814px;width:15px;height:8px;background:#e7d9ca"></div><div class="ab" style="left:735px;top:822px;width:15px;height:20px;background:#e1c6aa"></div><div class="ab" style="left:750px;top:814px;width:18px;height:8px;background:#feeede"></div><div class="ab" style="left:750px;top:822px;width:18px;height:20px;background:#fedfbf"></div><div class="ab" style="left:1513px;top:814px;width:46px;height:28px;background:linear-gradient(90deg,#f1d4b6 0 17px,#c7af96 17px 33px,#eccfb2 33px 46px)"></div><div class="ab" style="left:704px;top:841px;width:16px;height:8px;background:#f7e7d8"></div><div class="ab" style="left:704px;top:849px;width:16px;height:20px;background:#f5f5f5"></div><div class="ab" style="left:720px;top:841px;width:15px;height:8px;background:#dfd1c3"></div><div class="ab" style="left:720px;top:849px;width:15px;height:20px;background:#d7d7d7"></div><div class="ab" style="left:735px;top:841px;width:15px;height:8px;background:#ebdccd"></div><div class="ab" style="left:735px;top:849px;width:15px;height:20px;background:#e6e6e6"></div><div class="ab" style="left:750px;top:841px;width:18px;height:8px;background:#fdeede"></div><div class="ab" style="left:750px;top:849px;width:18px;height:20px;background:#fdfdfd"></div><div class="ab" style="left:1513px;top:841px;width:46px;height:28px;background:linear-gradient(90deg,#eeeeee 0 17px,#d5d5d5 17px 33px,#ededed 33px 46px)"></div><div class="ab" style="left:704px;top:868px;width:16px;height:8px;background:#fafafa"></div><div class="ab" style="left:704px;top:876px;width:16px;height:20px;background:#f9f9f9"></div><div class="ab" style="left:720px;top:868px;width:15px;height:8px;background:#e0e0e0"></div><div class="ab" style="left:720px;top:876px;width:15px;height:20px;background:#d8d8d8"></div><div class="ab" style="left:735px;top:868px;width:15px;height:8px;background:#e2e2e2"></div><div class="ab" style="left:735px;top:876px;width:15px;height:20px;background:#dbdbdb"></div><div class="ab" style="left:750px;top:868px;width:18px;height:8px;background:#f8f8f8"></div><div class="ab" style="left:750px;top:876px;width:18px;height:20px;background:#f7f7f7"></div><div class="ab" style="left:1513px;top:868px;width:46px;height:28px;background:linear-gradient(90deg,#ececec 0 17px,#cccccc 17px 33px,#ededed 33px 46px)"></div><div class="ab" style="left:704px;top:895px;width:16px;height:8px;background:#f6f6f6"></div><div class="ab" style="left:704px;top:903px;width:16px;height:20px;background:#f4f4f4"></div><div class="ab" style="left:720px;top:895px;width:15px;height:8px;background:#e0e0e0"></div><div class="ab" style="left:720px;top:903px;width:15px;height:20px;background:#d8d8d8"></div><div class="ab" style="left:735px;top:895px;width:15px;height:8px;background:#e8e8e8"></div><div class="ab" style="left:735px;top:903px;width:15px;height:20px;background:#e2e2e2"></div><div class="ab" style="left:750px;top:895px;width:18px;height:8px;background:#fcfcfc"></div><div class="ab" style="left:750px;top:903px;width:18px;height:20px;background:#fcfcfc"></div><div class="ab" style="left:1513px;top:895px;width:46px;height:28px;background:linear-gradient(90deg,#f9f9f9 0 17px,#e4e4e4 17px 33px,#f5f5f5 33px 46px)"></div><div class="ab" style="left:704px;top:922px;width:16px;height:8px;background:#faf8bb"></div><div class="ab" style="left:704px;top:930px;width:16px;height:20px;background:#f9f57d"></div><div class="ab" style="left:720px;top:922px;width:15px;height:8px;background:#d2d19d"></div><div class="ab" style="left:720px;top:930px;width:15px;height:20px;background:#c7c464"></div><div class="ab" style="left:735px;top:922px;width:15px;height:8px;background:#dfdda7"></div><div class="ab" style="left:735px;top:930px;width:15px;height:20px;background:#d7d36c"></div><div class="ab" style="left:750px;top:922px;width:18px;height:8px;background:#fcfabc"></div><div class="ab" style="left:750px;top:930px;width:18px;height:20px;background:#fbf77e"></div><div class="ab" style="left:1513px;top:922px;width:46px;height:28px;background:linear-gradient(90deg,#ebe776 0 17px,#c7c464 17px 33px,#ebe776 33px 46px)"></div>
<div class="ab" style="left:704px;top:205px;width:64px;height:15px;background:rgba(200,200,200,.35);border-radius:9px 9px 0 0"></div>
<div class="ab" style="left:1513px;top:212px;width:46px;height:9px;background:#eaeaea;border-radius:6px 6px 0 0"></div>
<div class="ab" style="left:1675px;top:221px;width:15px;height:729px;background:#f0f0f0"></div>
<div class="ab" style="left:1675px;top:222px;width:15px;height:16px;background:#fff;border:1px solid #b8b8b8"></div>
<div class="ab" style="left:1679px;top:228px;width:0;height:0;border-left:3.5px solid transparent;border-right:3.5px solid transparent;border-bottom:4px solid #707070"></div>
<div class="ab" style="left:1675px;top:238px;width:15px;height:130px;background:#fff;border:1px solid #b8b8b8"></div>
<div class="ab" style="left:1678px;top:255px;width:9px;height:2px;background:#20a040"></div>
<div class="ab" style="left:1675px;top:941px;width:15px;height:16px;background:#fff;border:1px solid #b8b8b8"></div>
<div class="ab" style="left:1679px;top:947px;width:0;height:0;border-left:3.5px solid transparent;border-right:3.5px solid transparent;border-top:4px solid #707070"></div>
<div class="ab" style="left:1690px;top:195px;width:1px;height:755px;background:#a0a0a0"></div>
<div class="ab" style="left:1692px;top:195px;width:222px;height:755px;border-left:1px solid #a0a0a0;border-top:1px solid #dadada;border-right:1px solid #a0a0a0"></div>
<div class="ab" style="left:1694px;top:221px;width:1px;height:729px;background:#a0a0a0"></div>
<div class="ab" style="left:1745px;top:199px;width:59px;height:23px;background:#dcdcdc;border:1px solid #c0c0c0;border-bottom:none"></div>
<div class="tb" style="left:1750px;top:203px">状态颜色</div>
<div class="ab" style="left:1695px;top:197px;width:51px;height:26px;background:#f0f0f0;border:1px solid #b8b8b8;border-bottom:none"></div>
<div class="tb" style="left:1702px;top:203px">列选择</div>
<div class="ab" style="left:1746px;top:221px;width:130px;height:1px;background:#b8b8b8"></div>
<div class="ab" style="left:1695px;top:222px;width:181px;height:20px;background:#fff;border:1px solid #a0a0a0"></div>
<div class="tb" style="left:1699px;top:225px;color:#8a8a8a">请输入搜索的列名</div>
<div class="ab" style="left:1695px;top:242px;width:165px;height:708px;overflow:hidden;background:#fff">
<div class="ab" style="left:0;top:0px;width:165px;height:26px;background:#cddbf2;border-bottom:1px solid #c8c8c8">
<div class="ab" style="left:9px;top:5px;width:14px;height:14px;background:#fff;border:1px solid #8f8f8f"></div>
<svg class="ab" style="left:11px;top:8px" width="10" height="8" viewBox="0 0 10 8"><path d="M1 4 L3.8 7 L9 1" fill="none" stroke="#707070" stroke-width="1.2"/></svg>
<div class="tb" style="left:29px;top:6px;color:#000">出仓员</div>
</div>
<div class="ab" style="left:0;top:26px;width:165px;height:26px;background:#fff;border-bottom:1px solid #c8c8c8">
<div class="ab" style="left:9px;top:5px;width:14px;height:14px;background:#fff;border:1px solid #8f8f8f"></div>
<svg class="ab" style="left:11px;top:8px" width="10" height="8" viewBox="0 0 10 8"><path d="M1 4 L3.8 7 L9 1" fill="none" stroke="#707070" stroke-width="1.2"/></svg>
<div class="tb" style="left:29px;top:6px;color:#000">预报时间</div>
</div>
<div class="ab" style="left:0;top:52px;width:165px;height:26px;background:#fff;border-bottom:1px solid #c8c8c8">
<div class="ab" style="left:9px;top:5px;width:14px;height:14px;background:#fff;border:1px solid #8f8f8f"></div>
<svg class="ab" style="left:11px;top:8px" width="10" height="8" viewBox="0 0 10 8"><path d="M1 4 L3.8 7 L9 1" fill="none" stroke="#707070" stroke-width="1.2"/></svg>
<div class="tb" style="left:29px;top:6px;color:#000">寄件人签名</div>
</div>
<div class="ab" style="left:0;top:78px;width:165px;height:26px;background:#fff;border-bottom:1px solid #c8c8c8">
<div class="ab" style="left:9px;top:5px;width:14px;height:14px;background:#fff;border:1px solid #8f8f8f"></div>
<svg class="ab" style="left:11px;top:8px" width="10" height="8" viewBox="0 0 10 8"><path d="M1 4 L3.8 7 L9 1" fill="none" stroke="#707070" stroke-width="1.2"/></svg>
<div class="tb" style="left:29px;top:6px;color:#000">录单员</div>
</div>
<div class="ab" style="left:0;top:104px;width:165px;height:26px;background:#f0f0f0;border-bottom:1px solid #c8c8c8">
<div class="ab" style="left:9px;top:5px;width:14px;height:14px;background:#fff;border:1px solid #c8c8c8"></div>
<svg class="ab" style="left:11px;top:8px" width="10" height="8" viewBox="0 0 10 8"><path d="M1 4 L3.8 7 L9 1" fill="none" stroke="#c8c8c8" stroke-width="1.2"/></svg>
<div class="tb" style="left:29px;top:6px;color:#9a9a9a">附件</div>
</div>
<div class="ab" style="left:0;top:130px;width:165px;height:26px;background:#f0f0f0;border-bottom:1px solid #c8c8c8">
<div class="ab" style="left:9px;top:5px;width:14px;height:14px;background:#fff;border:1px solid #c8c8c8"></div>
<div class="tb" style="left:29px;top:6px;color:#9a9a9a">获取结果</div>
</div>
<div class="ab" style="left:0;top:156px;width:165px;height:26px;background:#f0f0f0;border-bottom:1px solid #c8c8c8">
<div class="ab" style="left:9px;top:5px;width:14px;height:14px;background:#fff;border:1px solid #c8c8c8"></div>
<svg class="ab" style="left:11px;top:8px" width="10" height="8" viewBox="0 0 10 8"><path d="M1 4 L3.8 7 L9 1" fill="none" stroke="#c8c8c8" stroke-width="1.2"/></svg>
<div class="tb" style="left:29px;top:6px;color:#9a9a9a">到货时间</div>
</div>
<div class="ab" style="left:0;top:182px;width:165px;height:26px;background:#f0f0f0;border-bottom:1px solid #c8c8c8">
<div class="ab" style="left:9px;top:5px;width:14px;height:14px;background:#fff;border:1px solid #c8c8c8"></div>
<svg class="ab" style="left:11px;top:8px" width="10" height="8" viewBox="0 0 10 8"><path d="M1 4 L3.8 7 L9 1" fill="none" stroke="#c8c8c8" stroke-width="1.2"/></svg>
<div class="tb" style="left:29px;top:6px;color:#9a9a9a">运单号</div>
</div>
<div class="ab" style="left:0;top:208px;width:165px;height:26px;background:#fff;border-bottom:1px solid #c8c8c8">
<div class="ab" style="left:9px;top:5px;width:14px;height:14px;background:#fff;border:1px solid #8f8f8f"></div>
<svg class="ab" style="left:11px;top:8px" width="10" height="8" viewBox="0 0 10 8"><path d="M1 4 L3.8 7 L9 1" fill="none" stroke="#707070" stroke-width="1.2"/></svg>
<div class="tb" style="left:29px;top:6px;color:#000">状态</div>
</div>
<div class="ab" style="left:0;top:234px;width:165px;height:26px;background:#fff;border-bottom:1px solid #c8c8c8">
<div class="ab" style="left:9px;top:5px;width:14px;height:14px;background:#fff;border:1px solid #8f8f8f"></div>
<svg class="ab" style="left:11px;top:8px" width="10" height="8" viewBox="0 0 10 8"><path d="M1 4 L3.8 7 L9 1" fill="none" stroke="#707070" stroke-width="1.2"/></svg>
<div class="tb" style="left:29px;top:6px;color:#000">订单号</div>
</div>
<div class="ab" style="left:0;top:260px;width:165px;height:26px;background:#fff;border-bottom:1px solid #c8c8c8">
<div class="ab" style="left:9px;top:5px;width:14px;height:14px;background:#fff;border:1px solid #8f8f8f"></div>
<svg class="ab" style="left:11px;top:8px" width="10" height="8" viewBox="0 0 10 8"><path d="M1 4 L3.8 7 L9 1" fill="none" stroke="#707070" stroke-width="1.2"/></svg>
<div class="tb" style="left:29px;top:6px;color:#000">转单号</div>
</div>
<div class="ab" style="left:0;top:286px;width:165px;height:26px;background:#fff;border-bottom:1px solid #c8c8c8">
<div class="ab" style="left:9px;top:5px;width:14px;height:14px;background:#fff;border:1px solid #8f8f8f"></div>
<svg class="ab" style="left:11px;top:8px" width="10" height="8" viewBox="0 0 10 8"><path d="M1 4 L3.8 7 L9 1" fill="none" stroke="#707070" stroke-width="1.2"/></svg>
<div class="tb" style="left:29px;top:6px;color:#000">目的地</div>
</div>
<div class="ab" style="left:0;top:312px;width:165px;height:26px;background:#fff;border-bottom:1px solid #c8c8c8">
<div class="ab" style="left:9px;top:5px;width:14px;height:14px;background:#fff;border:1px solid #8f8f8f"></div>
<svg class="ab" style="left:11px;top:8px" width="10" height="8" viewBox="0 0 10 8"><path d="M1 4 L3.8 7 L9 1" fill="none" stroke="#707070" stroke-width="1.2"/></svg>
<div class="tb" style="left:29px;top:6px;color:#000">客户</div>
</div>
<div class="ab" style="left:0;top:338px;width:165px;height:26px;background:#fff;border-bottom:1px solid #c8c8c8">
<div class="ab" style="left:9px;top:5px;width:14px;height:14px;background:#fff;border:1px solid #8f8f8f"></div>
<svg class="ab" style="left:11px;top:8px" width="10" height="8" viewBox="0 0 10 8"><path d="M1 4 L3.8 7 L9 1" fill="none" stroke="#707070" stroke-width="1.2"/></svg>
<div class="tb" style="left:29px;top:6px;color:#000">收货承运路线</div>
</div>
<div class="ab" style="left:0;top:364px;width:165px;height:26px;background:#fff;border-bottom:1px solid #c8c8c8">
<div class="ab" style="left:9px;top:5px;width:14px;height:14px;background:#fff;border:1px solid #8f8f8f"></div>
<svg class="ab" style="left:11px;top:8px" width="10" height="8" viewBox="0 0 10 8"><path d="M1 4 L3.8 7 L9 1" fill="none" stroke="#707070" stroke-width="1.2"/></svg>
<div class="tb" style="left:29px;top:6px;color:#000">代理商</div>
</div>
<div class="ab" style="left:0;top:390px;width:165px;height:26px;background:#fff;border-bottom:1px solid #c8c8c8">
<div class="ab" style="left:9px;top:5px;width:14px;height:14px;background:#fff;border:1px solid #8f8f8f"></div>
<svg class="ab" style="left:11px;top:8px" width="10" height="8" viewBox="0 0 10 8"><path d="M1 4 L3.8 7 L9 1" fill="none" stroke="#707070" stroke-width="1.2"/></svg>
<div class="tb" style="left:29px;top:6px;color:#000">出仓时间</div>
</div>
<div class="ab" style="left:0;top:416px;width:165px;height:26px;background:#fff;border-bottom:1px solid #c8c8c8">
<div class="ab" style="left:9px;top:5px;width:14px;height:14px;background:#fff;border:1px solid #8f8f8f"></div>
<svg class="ab" style="left:11px;top:8px" width="10" height="8" viewBox="0 0 10 8"><path d="M1 4 L3.8 7 L9 1" fill="none" stroke="#707070" stroke-width="1.2"/></svg>
<div class="tb" style="left:29px;top:6px;color:#000">最新轨迹</div>
</div>
<div class="ab" style="left:0;top:442px;width:165px;height:26px;background:#fff;border-bottom:1px solid #c8c8c8">
<div class="ab" style="left:9px;top:5px;width:14px;height:14px;background:#fff;border:1px solid #8f8f8f"></div>
<svg class="ab" style="left:11px;top:8px" width="10" height="8" viewBox="0 0 10 8"><path d="M1 4 L3.8 7 L9 1" fill="none" stroke="#707070" stroke-width="1.2"/></svg>
<div class="tb" style="left:29px;top:6px;color:#000">最近轨迹时间</div>
</div>
<div class="ab" style="left:0;top:468px;width:165px;height:26px;background:#fff;border-bottom:1px solid #c8c8c8">
<div class="ab" style="left:9px;top:5px;width:14px;height:14px;background:#fff;border:1px solid #8f8f8f"></div>
<svg class="ab" style="left:11px;top:8px" width="10" height="8" viewBox="0 0 10 8"><path d="M1 4 L3.8 7 L9 1" fill="none" stroke="#707070" stroke-width="1.2"/></svg>
<div class="tb" style="left:29px;top:6px;color:#000">是否可自主打单</div>
</div>
<div class="ab" style="left:0;top:494px;width:165px;height:26px;background:#fff;border-bottom:1px solid #c8c8c8">
<div class="ab" style="left:9px;top:5px;width:14px;height:14px;background:#fff;border:1px solid #8f8f8f"></div>
<svg class="ab" style="left:11px;top:8px" width="10" height="8" viewBox="0 0 10 8"><path d="M1 4 L3.8 7 L9 1" fill="none" stroke="#707070" stroke-width="1.2"/></svg>
<div class="tb" style="left:29px;top:6px;color:#000">上网时间</div>
</div>
<div class="ab" style="left:0;top:520px;width:165px;height:26px;background:#fff;border-bottom:1px solid #c8c8c8">
<div class="ab" style="left:9px;top:5px;width:14px;height:14px;background:#fff;border:1px solid #8f8f8f"></div>
<svg class="ab" style="left:11px;top:8px" width="10" height="8" viewBox="0 0 10 8"><path d="M1 4 L3.8 7 L9 1" fill="none" stroke="#707070" stroke-width="1.2"/></svg>
<div class="tb" style="left:29px;top:6px;color:#000">录单时间</div>
</div>
<div class="ab" style="left:0;top:546px;width:165px;height:26px;background:#fff;border-bottom:1px solid #c8c8c8">
<div class="ab" style="left:9px;top:5px;width:14px;height:14px;background:#fff;border:1px solid #8f8f8f"></div>
<svg class="ab" style="left:11px;top:8px" width="10" height="8" viewBox="0 0 10 8"><path d="M1 4 L3.8 7 L9 1" fill="none" stroke="#707070" stroke-width="1.2"/></svg>
<div class="tb" style="left:29px;top:6px;color:#000">提取时间</div>
</div>
<div class="ab" style="left:0;top:572px;width:165px;height:26px;background:#fff;border-bottom:1px solid #c8c8c8">
<div class="ab" style="left:9px;top:5px;width:14px;height:14px;background:#fff;border:1px solid #8f8f8f"></div>
<svg class="ab" style="left:11px;top:8px" width="10" height="8" viewBox="0 0 10 8"><path d="M1 4 L3.8 7 L9 1" fill="none" stroke="#707070" stroke-width="1.2"/></svg>
<div class="tb" style="left:29px;top:6px;color:#000">签收时间</div>
</div>
<div class="ab" style="left:0;top:598px;width:165px;height:26px;background:#fff;border-bottom:1px solid #c8c8c8">
<div class="ab" style="left:9px;top:5px;width:14px;height:14px;background:#fff;border:1px solid #8f8f8f"></div>
<svg class="ab" style="left:11px;top:8px" width="10" height="8" viewBox="0 0 10 8"><path d="M1 4 L3.8 7 L9 1" fill="none" stroke="#707070" stroke-width="1.2"/></svg>
<div class="tb" style="left:29px;top:6px;color:#000">出仓渠道</div>
</div>
<div class="ab" style="left:0;top:624px;width:165px;height:26px;background:#fff;border-bottom:1px solid #c8c8c8">
<div class="ab" style="left:9px;top:5px;width:14px;height:14px;background:#fff;border:1px solid #8f8f8f"></div>
<svg class="ab" style="left:11px;top:8px" width="10" height="8" viewBox="0 0 10 8"><path d="M1 4 L3.8 7 L9 1" fill="none" stroke="#707070" stroke-width="1.2"/></svg>
<div class="tb" style="left:29px;top:6px;color:#000">业务员</div>
</div>
<div class="ab" style="left:0;top:650px;width:165px;height:26px;background:#fff;border-bottom:1px solid #c8c8c8">
<div class="ab" style="left:9px;top:5px;width:14px;height:14px;background:#fff;border:1px solid #8f8f8f"></div>
<svg class="ab" style="left:11px;top:8px" width="10" height="8" viewBox="0 0 10 8"><path d="M1 4 L3.8 7 L9 1" fill="none" stroke="#707070" stroke-width="1.2"/></svg>
<div class="tb" style="left:29px;top:6px;color:#000">收件人</div>
</div>
<div class="ab" style="left:0;top:676px;width:165px;height:26px;background:#fff;border-bottom:1px solid #c8c8c8">
<div class="ab" style="left:9px;top:5px;width:14px;height:14px;background:#fff;border:1px solid #8f8f8f"></div>
<svg class="ab" style="left:11px;top:8px" width="10" height="8" viewBox="0 0 10 8"><path d="M1 4 L3.8 7 L9 1" fill="none" stroke="#707070" stroke-width="1.2"/></svg>
<div class="tb" style="left:29px;top:6px;color:#000">城市</div>
</div>
<div class="ab" style="left:0;top:702px;width:165px;height:26px;background:#fff;border-bottom:1px solid #c8c8c8">
<div class="ab" style="left:9px;top:5px;width:14px;height:14px;background:#fff;border:1px solid #8f8f8f"></div>
<svg class="ab" style="left:11px;top:8px" width="10" height="8" viewBox="0 0 10 8"><path d="M1 4 L3.8 7 L9 1" fill="none" stroke="#707070" stroke-width="1.2"/></svg>
<div class="tb" style="left:29px;top:6px;color:#000"></div>
</div>
</div>
<div class="ab" style="left:1860px;top:241px;width:16px;height:709px;background:#f0f0f0"></div>
<div class="ab" style="left:1860px;top:242px;width:15px;height:17px;background:#fff;border:1px solid #b8b8b8"></div>
<div class="ab" style="left:1864px;top:249px;width:0;height:0;border-left:3.5px solid transparent;border-right:3.5px solid transparent;border-bottom:4px solid #707070"></div>
<div class="ab" style="left:1860px;top:259px;width:15px;height:398px;background:#fff;border:1px solid #b8b8b8"></div>
<div class="ab" style="left:1876px;top:221px;width:1px;height:729px;background:#a0a0a0"></div>
<div class="ab" style="left:1887px;top:369px;width:12px;font-size:12px;line-height:13.7px;color:#6d6d6d;white-space:normal;word-break:break-all">支持鼠标拖动排序</div>
<svg class="ab" style="left:1886px;top:258px" width="16" height="15" viewBox="0 0 16 15"><path d="M4 5 H9.5 A3.8 3.8 0 0 1 9.5 12.6 H7" fill="none" stroke="#2f6fd0" stroke-width="1.8"/><polygon points="0.5,5 5,1.2 5,8.8" fill="#244a88"/></svg>
<div class="badge" style="left:1809px;top:198px">3</div>
<div class="ab" style="left:1838px;top:192px;width:78px;height:75px;background:rgba(70,70,70,.82);border-radius:4px"></div>
<div class="ab" style="left:1833px;top:203px;width:0;height:0;border-top:5px solid transparent;border-bottom:5px solid transparent;border-right:5px solid rgba(70,70,70,.82)"></div>
<div class="ab" style="left:1843px;top:199px;width:72px;font-size:16px;line-height:22.5px;color:#fff;white-space:normal">列跟颜色<br>自定义并<br>排一块</div>
<div class="badge" style="left:1836px;top:80px">2</div>
<svg class="ab" style="left:1294px;top:941px" width="32" height="9" viewBox="0 0 32 9"><path d="M3 10 Q12 4 24 3 Q27 3 28 10" fill="none" stroke="#f0562a" stroke-width="2.6"/></svg>
<div class="ab" style="left:1490px;top:948px;width:3px;height:2px;background:#e83a2a"></div>
</body></html>
